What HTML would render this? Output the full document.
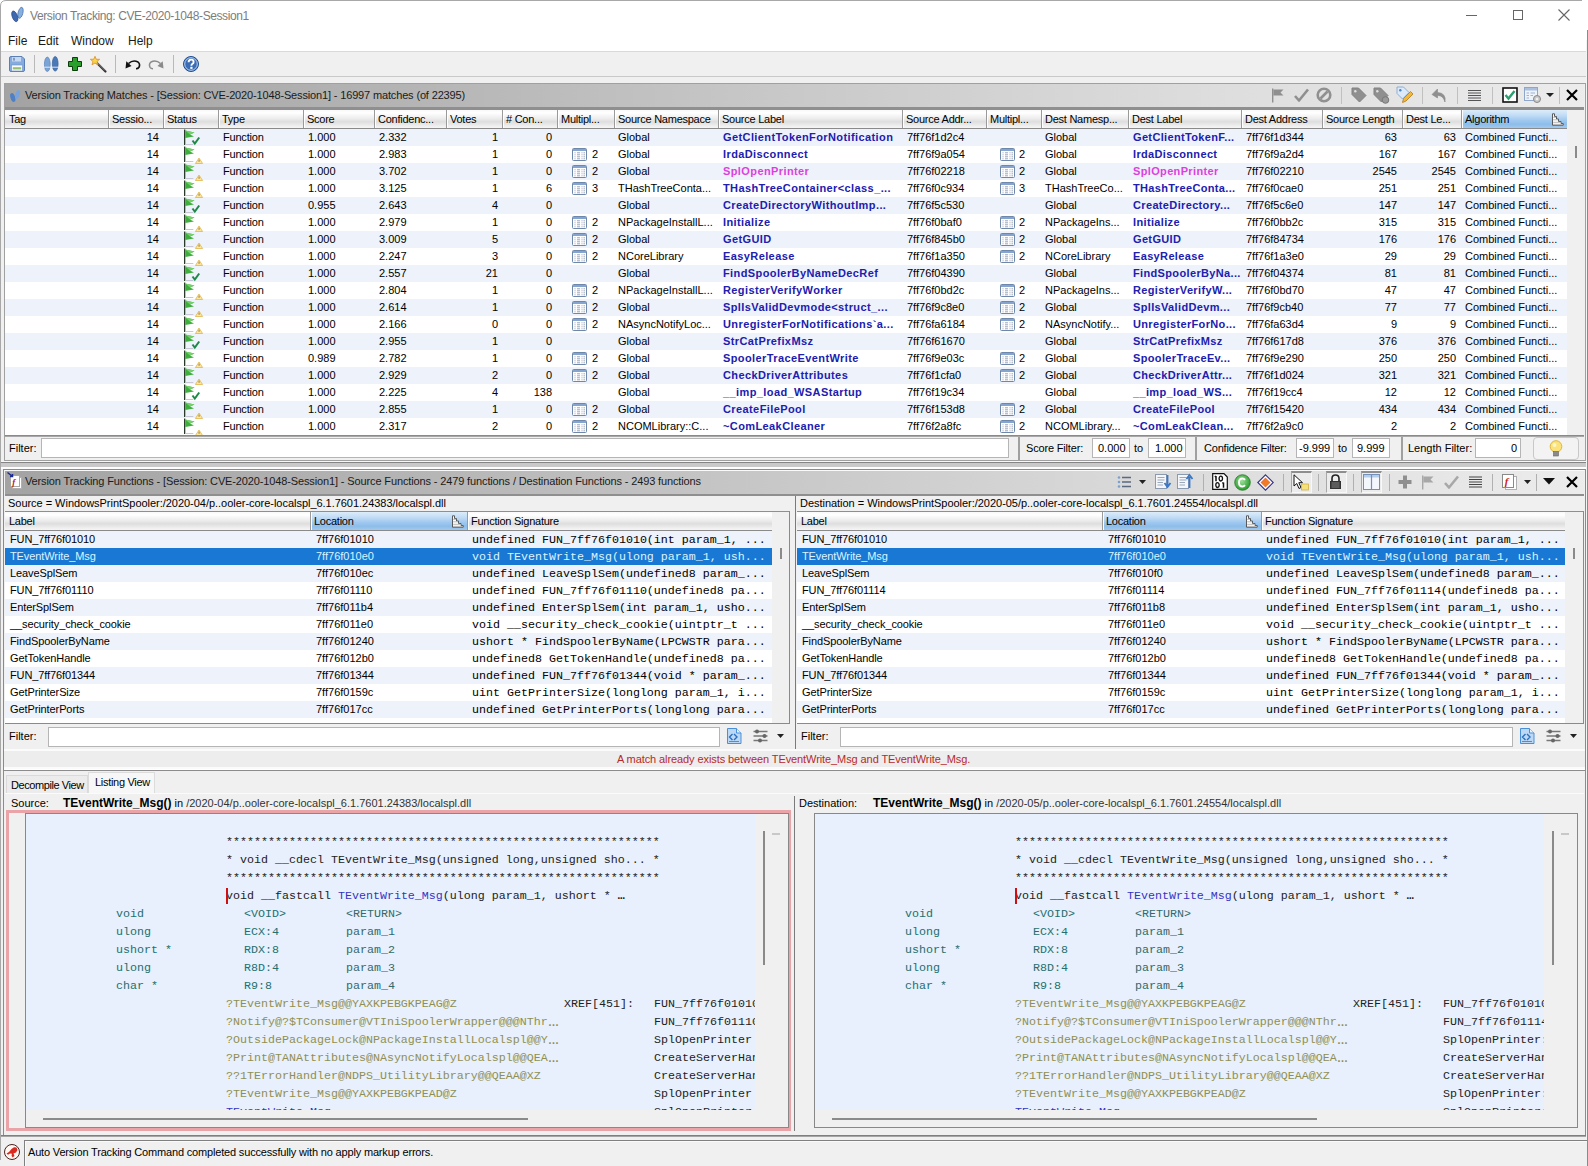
<!DOCTYPE html><html><head><meta charset="utf-8"><style>
*{margin:0;padding:0;box-sizing:border-box}
html,body{width:1588px;height:1166px;overflow:hidden;background:#f0f0f0;font-family:"Liberation Sans",sans-serif;font-size:11px;color:#000}
div{position:absolute}
.t{white-space:nowrap}
.m{font-family:"Liberation Mono",monospace;font-size:11.67px}
svg{position:absolute;overflow:visible}
</style></head><body><div style="left:0px;top:0px;width:1588px;height:32px;background:#fff"></div><div style="left:0px;top:32px;width:1588px;height:19px;background:#fff"></div><div style="left:0px;top:51px;width:1588px;height:1px;background:#d9d9d9"></div><div style="left:0px;top:52px;width:1588px;height:24px;background:#f0f0f0"></div><div style="left:0px;top:76px;width:1588px;height:1px;background:#c9c9c9"></div><div style="left:0px;top:77px;width:1588px;height:6px;background:#f0f0f0"></div><div style="left:0px;top:6px;width:1px;height:1154px;background:#a8a8a8"></div><div style="left:6px;top:0px;width:1576px;height:1px;background:#a8a8a8"></div><svg style="left:0;top:0" width="8" height="8"><path d="M0.5 8V6Q0.5 0.5 6 0.5H8" fill="none" stroke="#a8a8a8"/></svg><div style="left:1587px;top:30px;width:1px;height:1136px;background:#8a8a8a"></div><div style="left:1586px;top:40px;width:1px;height:1126px;background:#f4f4f4"></div><div class="t" style="left:30px;top:7px;height:18px;line-height:18px;font-size:12px;color:#7d7d7d;letter-spacing:-0.4px">Version Tracking: CVE-2020-1048-Session1</div><svg style="left:10px;top:5px" width="16" height="20" viewBox="0 0 16 20"><ellipse cx="10.5" cy="7.8" rx="2.4" ry="5.6" fill="#86b0e0" stroke="#4a70a8" stroke-width="0.7" transform="rotate(14 10.5 7.8)"/><ellipse cx="4.8" cy="11.3" rx="2.6" ry="5.6" fill="#3f68b0" stroke="#2a4a88" stroke-width="0.7" transform="rotate(-20 4.8 11.3)"/></svg><div style="left:1466px;top:15px;width:11px;height:1px;background:#666"></div><div style="left:1513px;top:10px;width:10px;height:10px;border:1px solid #666"></div><svg style="left:1558px;top:9px" width="12" height="12"><path d="M0.5 0.5L11.5 11.5M11.5 0.5L0.5 11.5" stroke="#666" stroke-width="1.1"/></svg><div class="t" style="left:8px;top:33px;height:17px;line-height:17px;font-size:12px;color:#1a1a1a">File</div><div class="t" style="left:38px;top:33px;height:17px;line-height:17px;font-size:12px;color:#1a1a1a">Edit</div><div class="t" style="left:71px;top:33px;height:17px;line-height:17px;font-size:12px;color:#1a1a1a">Window</div><div class="t" style="left:128px;top:33px;height:17px;line-height:17px;font-size:12px;color:#1a1a1a">Help</div><svg style="left:9px;top:56px" width="16" height="16" viewBox="0 0 16 16"><path d="M0.5 2Q0.5 0.5 2 0.5H13L15.5 3V14Q15.5 15.5 14 15.5H2Q0.5 15.5 0.5 14Z" fill="#86abdf" stroke="#5b7fb5"/><rect x="3" y="1" width="9" height="4.5" fill="#c6d9f2"/><rect x="4.5" y="1.8" width="1" height="2.8" fill="#3a5a90"/><rect x="2.5" y="9" width="11" height="6" fill="#f8fbff" stroke="#6a8ec2" stroke-width="0.6"/><rect x="3.8" y="11.2" width="8.4" height="2.2" fill="#96c070"/></svg><div style="left:34px;top:55px;width:1px;height:18px;background:#b9b9b9"></div><svg style="left:44px;top:56px" width="15" height="16" viewBox="0 0 15 16"><ellipse cx="3.3" cy="8.3" rx="2.9" ry="7.2" fill="#7aa3d8" stroke="#5a82ba" stroke-width="0.7"/><ellipse cx="11.2" cy="7.8" rx="2.9" ry="7.3" fill="#4a78b8" stroke="#35609e" stroke-width="0.7"/><path d="M0 11.2H15" stroke="#f0f0f0" stroke-width="0.9"/></svg><svg style="left:68px;top:57px" width="14" height="14" viewBox="0 0 14 14"><path d="M4.5 0.5H9.5V4.5H13.5V9.5H9.5V13.5H4.5V9.5H0.5V4.5H4.5Z" fill="#2aa02a" stroke="#0d3d0d" stroke-width="1"/></svg><svg style="left:90px;top:56px" width="17" height="17" viewBox="0 0 17 17"><line x1="6" y1="6" x2="15.5" y2="15.5" stroke="#333" stroke-width="2.2" stroke-linecap="round"/><line x1="7" y1="6.5" x2="15" y2="14.5" stroke="#999" stroke-width="0.8"/><path d="M5 0.3L6.3 3.3L9.6 3.3L7 5.5L8 8.8L5 7L2 8.8L3 5.5L0.4 3.3L3.7 3.3Z" fill="#f7d54a" stroke="#e08a2a" stroke-width="0.8"/></svg><div style="left:115px;top:55px;width:1px;height:18px;background:#b9b9b9"></div><svg style="left:125px;top:59px" width="16" height="11" viewBox="0 0 16 11"><path d="M3.5 4.5Q8 0.5 13 3Q15.5 5 14 8.3Q13 9.8 11 9.8" fill="none" stroke="#111" stroke-width="1.6"/><path d="M0.5 9.5L1.3 2.3L6.5 7Z" fill="#111"/></svg><svg style="left:148px;top:59px" width="16" height="11" viewBox="0 0 16 11"><path d="M12.5 4.5Q8 0.5 3 3Q0.5 5 2 8.3Q3 9.8 5 9.8" fill="none" stroke="#8a8a8a" stroke-width="1.5"/><path d="M15.5 9.5L14.7 2.3L9.5 7Z" fill="#8a8a8a"/></svg><div style="left:173px;top:55px;width:1px;height:18px;background:#b9b9b9"></div><svg style="left:183px;top:56px" width="16" height="16" viewBox="0 0 16 16"><circle cx="8" cy="8" r="7.5" fill="#3a6db5" stroke="#1f4f90"/><circle cx="8" cy="8" r="6.3" fill="none" stroke="#c8daf2" stroke-width="0.9"/><path d="M5.6 6.2Q5.6 3.6 8.1 3.6Q10.6 3.6 10.6 5.9Q10.6 7.2 9.2 8Q8.4 8.5 8.4 9.7" fill="none" stroke="#fff" stroke-width="1.9"/><rect x="7.3" y="10.8" width="2.2" height="2.1" fill="#fff"/></svg><div style="left:4px;top:83px;width:1582px;height:378px;border:1px solid #a0a0a0;background:#f0f0f0"></div><div style="left:5px;top:84px;width:1579px;height:23px;background:linear-gradient(90deg,#a3a3a3 0%,#b4b4b4 25%,#c9c9c9 50%,#dcdcdc 75%,#ececec 100%)"></div><div style="left:5px;top:107px;width:1579px;height:3px;background:#8f8f8f"></div><div class="t" style="left:25px;top:84px;height:23px;line-height:23px;color:#1a1a1a;letter-spacing:-0.15px">Version Tracking Matches - [Session: CVE-2020-1048-Session1] - 16997 matches (of 22395)</div><svg style="left:9px;top:88px" width="12" height="15" viewBox="0 0 12 15"><ellipse cx="3.8" cy="9.5" rx="2.3" ry="4.6" fill="#4f7fc4" transform="rotate(-18 3.8 9.5)"/><ellipse cx="8.5" cy="6.5" rx="2.1" ry="4.6" fill="#7aa3dc" transform="rotate(18 8.5 6.5)"/></svg><svg style="left:1271px;top:88px" width="14" height="15" viewBox="0 0 14 15"><rect x="1" y="0.5" width="1.4" height="14" fill="#8f8f8f"/><path d="M2.4 1.5H12.5L9.5 4.5L12.5 7.5H2.4Z" fill="#8f8f8f"/></svg><svg style="left:1294px;top:88px" width="15" height="14" viewBox="0 0 15 14"><path d="M1 8L5 12.5L14 1.5" fill="none" stroke="#8f8f8f" stroke-width="2.6" stroke-linejoin="round"/></svg><svg style="left:1316px;top:87px" width="16" height="16" viewBox="0 0 16 16"><circle cx="8" cy="8" r="6.3" fill="none" stroke="#909090" stroke-width="2.6"/><path d="M4.5 11.5L11.5 4.5" stroke="#909090" stroke-width="2.6"/></svg><div style="left:1341px;top:87px;width:1px;height:17px;background:#c0c0c0"></div><svg style="left:1351px;top:87px" width="16" height="16" viewBox="0 0 16 16"><path d="M1 1H7.5L15 8.5L8.5 15L1 7.5Z" fill="#8f8f8f" stroke="#808080"/><circle cx="4.3" cy="4.3" r="1.2" fill="#e0e0e0"/></svg><svg style="left:1373px;top:87px" width="17" height="17" viewBox="0 0 17 17"><path d="M1 1H7.5L15 8.5L8.5 15L1 7.5Z" fill="#8f8f8f" stroke="#808080"/><circle cx="4.3" cy="4.3" r="1.2" fill="#e0e0e0"/><circle cx="12.5" cy="13" r="3.3" fill="#9a9a9a" stroke="#777"/></svg><svg style="left:1396px;top:86px" width="18" height="18" viewBox="0 0 18 18"><path d="M1 1H7.5L13 6.5L6.5 13L1 7.5Z" fill="#dbe9f8" stroke="#8aaed6"/><circle cx="4.3" cy="4.3" r="1.2" fill="#4a86c8"/><path d="M6.5 16.5L7.5 12.5L14.5 5.5L17 8L10 15Z" fill="#f3b73b" stroke="#b07a20" stroke-width="0.8"/></svg><div style="left:1422px;top:87px;width:1px;height:17px;background:#c0c0c0"></div><svg style="left:1431px;top:87px" width="17" height="17" viewBox="0 0 17 17"><path d="M6.5 2L1 7.5L6.5 11V8.5Q12 8 14 15Q15.5 6 6.5 5.5Z" fill="#8f8f8f" stroke="#888" stroke-width="0.6"/></svg><div style="left:1457px;top:87px;width:1px;height:17px;background:#c0c0c0"></div><svg style="left:1467px;top:88px" width="15" height="15" viewBox="0 0 15 15"><path d="M1 2.5H14M1 5H14M1 7.5H14M1 10H14M1 12.5H14" stroke="#555" stroke-width="1.1"/></svg><div style="left:1492px;top:87px;width:1px;height:17px;background:#c0c0c0"></div><svg style="left:1502px;top:87px" width="16" height="16" viewBox="0 0 16 16"><rect x="1" y="1" width="14" height="14" fill="#fff" stroke="#111" stroke-width="1.6"/><path d="M3.5 8L6.5 11.5L12.5 4" fill="none" stroke="#2ca070" stroke-width="2.4"/></svg><svg style="left:1524px;top:87px" width="18" height="17" viewBox="0 0 18 17"><rect x="0.5" y="0.5" width="13" height="13" fill="#eef3fa" stroke="#8ea6c8"/><rect x="1" y="1" width="12" height="2.5" fill="#a9c0de"/><path d="M2.5 6H5M6.5 6H11M2.5 8.5H5M6.5 8.5H9M2.5 11H5" stroke="#9fb3cf"/><circle cx="13" cy="12" r="3.5" fill="#c8c8c8" stroke="#888"/><circle cx="13" cy="12" r="1.3" fill="#f0f0f0"/></svg><svg style="left:1546px;top:93px" width="8" height="5"><path d="M0 0H8L4 4Z" fill="#222"/></svg><div style="left:1559px;top:87px;width:1px;height:17px;background:#c0c0c0"></div><svg style="left:1566px;top:89px" width="12" height="12" viewBox="0 0 12 12"><path d="M1 1L11 11M11 1L1 11" stroke="#000" stroke-width="2.2"/></svg><div style="left:5px;top:129px;width:1562px;height:306px;background:#fff"></div><div style="left:5px;top:129px;width:1562px;height:17px;background:#edf2fb"></div><div style="left:5px;top:163px;width:1562px;height:17px;background:#edf2fb"></div><div style="left:5px;top:197px;width:1562px;height:17px;background:#edf2fb"></div><div style="left:5px;top:231px;width:1562px;height:17px;background:#edf2fb"></div><div style="left:5px;top:265px;width:1562px;height:17px;background:#edf2fb"></div><div style="left:5px;top:299px;width:1562px;height:17px;background:#edf2fb"></div><div style="left:5px;top:333px;width:1562px;height:17px;background:#edf2fb"></div><div style="left:5px;top:367px;width:1562px;height:17px;background:#edf2fb"></div><div style="left:5px;top:401px;width:1562px;height:17px;background:#edf2fb"></div><div class="t" style="right:1429px;top:129px;height:17px;line-height:17px;text-align:right;">14</div><svg style="left:184px;top:129px" width="20" height="17" viewBox="0 0 20 17"><rect x="0" y="0.5" width="1.3" height="15.5" fill="#2a3a2a"/><path d="M1.2 1.5L10.5 3.5L6 5.5L10 7.5L1.2 9Z" fill="#3fae3f"/><path d="M1.2 1.5L10.5 3.5L6 5.5Z" fill="#74d06a"/><rect x="1.3" y="15" width="8" height="1" fill="#c7c7d7"/><path d="M8.5 11.5L10.8 14.5L15.2 8.5" fill="none" stroke="#1e8a4a" stroke-width="2"/></svg><div class="t" style="left:223px;top:129px;height:17px;line-height:17px;letter-spacing:-0.2px">Function</div><div class="t" style="left:308px;top:129px;height:17px;line-height:17px;">1.000</div><div class="t" style="left:379px;top:129px;height:17px;line-height:17px;">2.332</div><div class="t" style="right:1090px;top:129px;height:17px;line-height:17px;text-align:right;">1</div><div class="t" style="right:1036px;top:129px;height:17px;line-height:17px;text-align:right;">0</div><div class="t" style="left:618px;top:129px;height:17px;line-height:17px;">Global</div><div class="t" style="left:723px;top:129px;height:17px;line-height:17px;font-weight:bold;color:#2020ae;letter-spacing:0.4px">GetClientTokenForNotification</div><div class="t" style="left:907px;top:129px;height:17px;line-height:17px;">7ff76f1d2c4</div><div class="t" style="left:1045px;top:129px;height:17px;line-height:17px;">Global</div><div class="t" style="left:1133px;top:129px;height:17px;line-height:17px;font-weight:bold;color:#2020ae;letter-spacing:0.35px">GetClientTokenF...</div><div class="t" style="left:1246px;top:129px;height:17px;line-height:17px;">7ff76f1d344</div><div class="t" style="right:191px;top:129px;height:17px;line-height:17px;text-align:right;">63</div><div class="t" style="right:132px;top:129px;height:17px;line-height:17px;text-align:right;">63</div><div class="t" style="left:1465px;top:129px;height:17px;line-height:17px;">Combined Functi...</div><div class="t" style="right:1429px;top:146px;height:17px;line-height:17px;text-align:right;">14</div><svg style="left:184px;top:146px" width="20" height="17" viewBox="0 0 20 17"><rect x="0" y="0.5" width="1.3" height="15.5" fill="#2a3a2a"/><path d="M1.2 1.5L10.5 3.5L6 5.5L10 7.5L1.2 9Z" fill="#3fae3f"/><path d="M1.2 1.5L10.5 3.5L6 5.5Z" fill="#74d06a"/><rect x="1.3" y="15" width="8" height="1" fill="#c7c7d7"/><path d="M15 12L18.6 17.5H11.4Z" fill="#fbe7a0" stroke="#e2b44a" stroke-width="0.8"/><rect x="14.6" y="13.6" width="0.9" height="2.2" fill="#8a7030"/></svg><div class="t" style="left:223px;top:146px;height:17px;line-height:17px;letter-spacing:-0.2px">Function</div><div class="t" style="left:308px;top:146px;height:17px;line-height:17px;">1.000</div><div class="t" style="left:379px;top:146px;height:17px;line-height:17px;">2.983</div><div class="t" style="right:1090px;top:146px;height:17px;line-height:17px;text-align:right;">1</div><div class="t" style="right:1036px;top:146px;height:17px;line-height:17px;text-align:right;">0</div><svg style="left:572px;top:148px" width="15" height="13" viewBox="0 0 15 13"><rect x="0.5" y="0.5" width="14" height="12" rx="1" fill="#fff" stroke="#6d88ab"/><rect x="1" y="1" width="13" height="2" fill="#85a5d0"/><path d="M2.5 4.8H3.5M5 4.8H8M9.5 4.8H10.5M11.5 4.8H13M2.5 6.8H3.5M5 6.8H8M9.5 6.8H10.5M11.5 6.8H13M2.5 8.8H3.5M5 8.8H8M9.5 8.8H10.5M11.5 8.8H13M2.5 10.8H3.5M5 10.8H8M9.5 10.8H10.5M11.5 10.8H13" stroke="#9aa6b8" stroke-width="1"/></svg><div class="t" style="left:592px;top:146px;height:17px;line-height:17px;">2</div><div class="t" style="left:618px;top:146px;height:17px;line-height:17px;">Global</div><div class="t" style="left:723px;top:146px;height:17px;line-height:17px;font-weight:bold;color:#2020ae;letter-spacing:0.4px">IrdaDisconnect</div><div class="t" style="left:907px;top:146px;height:17px;line-height:17px;">7ff76f9a054</div><svg style="left:1000px;top:148px" width="15" height="13" viewBox="0 0 15 13"><rect x="0.5" y="0.5" width="14" height="12" rx="1" fill="#fff" stroke="#6d88ab"/><rect x="1" y="1" width="13" height="2" fill="#85a5d0"/><path d="M2.5 4.8H3.5M5 4.8H8M9.5 4.8H10.5M11.5 4.8H13M2.5 6.8H3.5M5 6.8H8M9.5 6.8H10.5M11.5 6.8H13M2.5 8.8H3.5M5 8.8H8M9.5 8.8H10.5M11.5 8.8H13M2.5 10.8H3.5M5 10.8H8M9.5 10.8H10.5M11.5 10.8H13" stroke="#9aa6b8" stroke-width="1"/></svg><div class="t" style="left:1019px;top:146px;height:17px;line-height:17px;">2</div><div class="t" style="left:1045px;top:146px;height:17px;line-height:17px;">Global</div><div class="t" style="left:1133px;top:146px;height:17px;line-height:17px;font-weight:bold;color:#2020ae;letter-spacing:0.35px">IrdaDisconnect</div><div class="t" style="left:1246px;top:146px;height:17px;line-height:17px;">7ff76f9a2d4</div><div class="t" style="right:191px;top:146px;height:17px;line-height:17px;text-align:right;">167</div><div class="t" style="right:132px;top:146px;height:17px;line-height:17px;text-align:right;">167</div><div class="t" style="left:1465px;top:146px;height:17px;line-height:17px;">Combined Functi...</div><div class="t" style="right:1429px;top:163px;height:17px;line-height:17px;text-align:right;">14</div><svg style="left:184px;top:163px" width="20" height="17" viewBox="0 0 20 17"><rect x="0" y="0.5" width="1.3" height="15.5" fill="#2a3a2a"/><path d="M1.2 1.5L10.5 3.5L6 5.5L10 7.5L1.2 9Z" fill="#3fae3f"/><path d="M1.2 1.5L10.5 3.5L6 5.5Z" fill="#74d06a"/><rect x="1.3" y="15" width="8" height="1" fill="#c7c7d7"/><path d="M15 12L18.6 17.5H11.4Z" fill="#fbe7a0" stroke="#e2b44a" stroke-width="0.8"/><rect x="14.6" y="13.6" width="0.9" height="2.2" fill="#8a7030"/></svg><div class="t" style="left:223px;top:163px;height:17px;line-height:17px;letter-spacing:-0.2px">Function</div><div class="t" style="left:308px;top:163px;height:17px;line-height:17px;">1.000</div><div class="t" style="left:379px;top:163px;height:17px;line-height:17px;">3.702</div><div class="t" style="right:1090px;top:163px;height:17px;line-height:17px;text-align:right;">1</div><div class="t" style="right:1036px;top:163px;height:17px;line-height:17px;text-align:right;">0</div><svg style="left:572px;top:165px" width="15" height="13" viewBox="0 0 15 13"><rect x="0.5" y="0.5" width="14" height="12" rx="1" fill="#fff" stroke="#6d88ab"/><rect x="1" y="1" width="13" height="2" fill="#85a5d0"/><path d="M2.5 4.8H3.5M5 4.8H8M9.5 4.8H10.5M11.5 4.8H13M2.5 6.8H3.5M5 6.8H8M9.5 6.8H10.5M11.5 6.8H13M2.5 8.8H3.5M5 8.8H8M9.5 8.8H10.5M11.5 8.8H13M2.5 10.8H3.5M5 10.8H8M9.5 10.8H10.5M11.5 10.8H13" stroke="#9aa6b8" stroke-width="1"/></svg><div class="t" style="left:592px;top:163px;height:17px;line-height:17px;">2</div><div class="t" style="left:618px;top:163px;height:17px;line-height:17px;">Global</div><div class="t" style="left:723px;top:163px;height:17px;line-height:17px;font-weight:bold;color:#dd3fdd;letter-spacing:0.4px">SplOpenPrinter</div><div class="t" style="left:907px;top:163px;height:17px;line-height:17px;">7ff76f02218</div><svg style="left:1000px;top:165px" width="15" height="13" viewBox="0 0 15 13"><rect x="0.5" y="0.5" width="14" height="12" rx="1" fill="#fff" stroke="#6d88ab"/><rect x="1" y="1" width="13" height="2" fill="#85a5d0"/><path d="M2.5 4.8H3.5M5 4.8H8M9.5 4.8H10.5M11.5 4.8H13M2.5 6.8H3.5M5 6.8H8M9.5 6.8H10.5M11.5 6.8H13M2.5 8.8H3.5M5 8.8H8M9.5 8.8H10.5M11.5 8.8H13M2.5 10.8H3.5M5 10.8H8M9.5 10.8H10.5M11.5 10.8H13" stroke="#9aa6b8" stroke-width="1"/></svg><div class="t" style="left:1019px;top:163px;height:17px;line-height:17px;">2</div><div class="t" style="left:1045px;top:163px;height:17px;line-height:17px;">Global</div><div class="t" style="left:1133px;top:163px;height:17px;line-height:17px;font-weight:bold;color:#dd3fdd;letter-spacing:0.35px">SplOpenPrinter</div><div class="t" style="left:1246px;top:163px;height:17px;line-height:17px;">7ff76f02210</div><div class="t" style="right:191px;top:163px;height:17px;line-height:17px;text-align:right;">2545</div><div class="t" style="right:132px;top:163px;height:17px;line-height:17px;text-align:right;">2545</div><div class="t" style="left:1465px;top:163px;height:17px;line-height:17px;">Combined Functi...</div><div class="t" style="right:1429px;top:180px;height:17px;line-height:17px;text-align:right;">14</div><svg style="left:184px;top:180px" width="20" height="17" viewBox="0 0 20 17"><rect x="0" y="0.5" width="1.3" height="15.5" fill="#2a3a2a"/><path d="M1.2 1.5L10.5 3.5L6 5.5L10 7.5L1.2 9Z" fill="#3fae3f"/><path d="M1.2 1.5L10.5 3.5L6 5.5Z" fill="#74d06a"/><rect x="1.3" y="15" width="8" height="1" fill="#c7c7d7"/><path d="M15 12L18.6 17.5H11.4Z" fill="#fbe7a0" stroke="#e2b44a" stroke-width="0.8"/><rect x="14.6" y="13.6" width="0.9" height="2.2" fill="#8a7030"/></svg><div class="t" style="left:223px;top:180px;height:17px;line-height:17px;letter-spacing:-0.2px">Function</div><div class="t" style="left:308px;top:180px;height:17px;line-height:17px;">1.000</div><div class="t" style="left:379px;top:180px;height:17px;line-height:17px;">3.125</div><div class="t" style="right:1090px;top:180px;height:17px;line-height:17px;text-align:right;">1</div><div class="t" style="right:1036px;top:180px;height:17px;line-height:17px;text-align:right;">6</div><svg style="left:572px;top:182px" width="15" height="13" viewBox="0 0 15 13"><rect x="0.5" y="0.5" width="14" height="12" rx="1" fill="#fff" stroke="#6d88ab"/><rect x="1" y="1" width="13" height="2" fill="#85a5d0"/><path d="M2.5 4.8H3.5M5 4.8H8M9.5 4.8H10.5M11.5 4.8H13M2.5 6.8H3.5M5 6.8H8M9.5 6.8H10.5M11.5 6.8H13M2.5 8.8H3.5M5 8.8H8M9.5 8.8H10.5M11.5 8.8H13M2.5 10.8H3.5M5 10.8H8M9.5 10.8H10.5M11.5 10.8H13" stroke="#9aa6b8" stroke-width="1"/></svg><div class="t" style="left:592px;top:180px;height:17px;line-height:17px;">3</div><div class="t" style="left:618px;top:180px;height:17px;line-height:17px;">THashTreeConta...</div><div class="t" style="left:723px;top:180px;height:17px;line-height:17px;font-weight:bold;color:#2020ae;letter-spacing:0.4px">THashTreeContainer&lt;class_...</div><div class="t" style="left:907px;top:180px;height:17px;line-height:17px;">7ff76f0c934</div><svg style="left:1000px;top:182px" width="15" height="13" viewBox="0 0 15 13"><rect x="0.5" y="0.5" width="14" height="12" rx="1" fill="#fff" stroke="#6d88ab"/><rect x="1" y="1" width="13" height="2" fill="#85a5d0"/><path d="M2.5 4.8H3.5M5 4.8H8M9.5 4.8H10.5M11.5 4.8H13M2.5 6.8H3.5M5 6.8H8M9.5 6.8H10.5M11.5 6.8H13M2.5 8.8H3.5M5 8.8H8M9.5 8.8H10.5M11.5 8.8H13M2.5 10.8H3.5M5 10.8H8M9.5 10.8H10.5M11.5 10.8H13" stroke="#9aa6b8" stroke-width="1"/></svg><div class="t" style="left:1019px;top:180px;height:17px;line-height:17px;">3</div><div class="t" style="left:1045px;top:180px;height:17px;line-height:17px;">THashTreeCo...</div><div class="t" style="left:1133px;top:180px;height:17px;line-height:17px;font-weight:bold;color:#2020ae;letter-spacing:0.35px">THashTreeConta...</div><div class="t" style="left:1246px;top:180px;height:17px;line-height:17px;">7ff76f0cae0</div><div class="t" style="right:191px;top:180px;height:17px;line-height:17px;text-align:right;">251</div><div class="t" style="right:132px;top:180px;height:17px;line-height:17px;text-align:right;">251</div><div class="t" style="left:1465px;top:180px;height:17px;line-height:17px;">Combined Functi...</div><div class="t" style="right:1429px;top:197px;height:17px;line-height:17px;text-align:right;">14</div><svg style="left:184px;top:197px" width="20" height="17" viewBox="0 0 20 17"><rect x="0" y="0.5" width="1.3" height="15.5" fill="#2a3a2a"/><path d="M1.2 1.5L10.5 3.5L6 5.5L10 7.5L1.2 9Z" fill="#3fae3f"/><path d="M1.2 1.5L10.5 3.5L6 5.5Z" fill="#74d06a"/><rect x="1.3" y="15" width="8" height="1" fill="#c7c7d7"/><path d="M8.5 11.5L10.8 14.5L15.2 8.5" fill="none" stroke="#1e8a4a" stroke-width="2"/></svg><div class="t" style="left:223px;top:197px;height:17px;line-height:17px;letter-spacing:-0.2px">Function</div><div class="t" style="left:308px;top:197px;height:17px;line-height:17px;">0.955</div><div class="t" style="left:379px;top:197px;height:17px;line-height:17px;">2.643</div><div class="t" style="right:1090px;top:197px;height:17px;line-height:17px;text-align:right;">4</div><div class="t" style="right:1036px;top:197px;height:17px;line-height:17px;text-align:right;">0</div><div class="t" style="left:618px;top:197px;height:17px;line-height:17px;">Global</div><div class="t" style="left:723px;top:197px;height:17px;line-height:17px;font-weight:bold;color:#2020ae;letter-spacing:0.4px">CreateDirectoryWithoutImp...</div><div class="t" style="left:907px;top:197px;height:17px;line-height:17px;">7ff76f5c530</div><div class="t" style="left:1045px;top:197px;height:17px;line-height:17px;">Global</div><div class="t" style="left:1133px;top:197px;height:17px;line-height:17px;font-weight:bold;color:#2020ae;letter-spacing:0.35px">CreateDirectory...</div><div class="t" style="left:1246px;top:197px;height:17px;line-height:17px;">7ff76f5c6e0</div><div class="t" style="right:191px;top:197px;height:17px;line-height:17px;text-align:right;">147</div><div class="t" style="right:132px;top:197px;height:17px;line-height:17px;text-align:right;">147</div><div class="t" style="left:1465px;top:197px;height:17px;line-height:17px;">Combined Functi...</div><div class="t" style="right:1429px;top:214px;height:17px;line-height:17px;text-align:right;">14</div><svg style="left:184px;top:214px" width="20" height="17" viewBox="0 0 20 17"><rect x="0" y="0.5" width="1.3" height="15.5" fill="#2a3a2a"/><path d="M1.2 1.5L10.5 3.5L6 5.5L10 7.5L1.2 9Z" fill="#3fae3f"/><path d="M1.2 1.5L10.5 3.5L6 5.5Z" fill="#74d06a"/><rect x="1.3" y="15" width="8" height="1" fill="#c7c7d7"/><path d="M15 12L18.6 17.5H11.4Z" fill="#fbe7a0" stroke="#e2b44a" stroke-width="0.8"/><rect x="14.6" y="13.6" width="0.9" height="2.2" fill="#8a7030"/></svg><div class="t" style="left:223px;top:214px;height:17px;line-height:17px;letter-spacing:-0.2px">Function</div><div class="t" style="left:308px;top:214px;height:17px;line-height:17px;">1.000</div><div class="t" style="left:379px;top:214px;height:17px;line-height:17px;">2.979</div><div class="t" style="right:1090px;top:214px;height:17px;line-height:17px;text-align:right;">1</div><div class="t" style="right:1036px;top:214px;height:17px;line-height:17px;text-align:right;">0</div><svg style="left:572px;top:216px" width="15" height="13" viewBox="0 0 15 13"><rect x="0.5" y="0.5" width="14" height="12" rx="1" fill="#fff" stroke="#6d88ab"/><rect x="1" y="1" width="13" height="2" fill="#85a5d0"/><path d="M2.5 4.8H3.5M5 4.8H8M9.5 4.8H10.5M11.5 4.8H13M2.5 6.8H3.5M5 6.8H8M9.5 6.8H10.5M11.5 6.8H13M2.5 8.8H3.5M5 8.8H8M9.5 8.8H10.5M11.5 8.8H13M2.5 10.8H3.5M5 10.8H8M9.5 10.8H10.5M11.5 10.8H13" stroke="#9aa6b8" stroke-width="1"/></svg><div class="t" style="left:592px;top:214px;height:17px;line-height:17px;">2</div><div class="t" style="left:618px;top:214px;height:17px;line-height:17px;">NPackageInstallL...</div><div class="t" style="left:723px;top:214px;height:17px;line-height:17px;font-weight:bold;color:#2020ae;letter-spacing:0.4px">Initialize</div><div class="t" style="left:907px;top:214px;height:17px;line-height:17px;">7ff76f0baf0</div><svg style="left:1000px;top:216px" width="15" height="13" viewBox="0 0 15 13"><rect x="0.5" y="0.5" width="14" height="12" rx="1" fill="#fff" stroke="#6d88ab"/><rect x="1" y="1" width="13" height="2" fill="#85a5d0"/><path d="M2.5 4.8H3.5M5 4.8H8M9.5 4.8H10.5M11.5 4.8H13M2.5 6.8H3.5M5 6.8H8M9.5 6.8H10.5M11.5 6.8H13M2.5 8.8H3.5M5 8.8H8M9.5 8.8H10.5M11.5 8.8H13M2.5 10.8H3.5M5 10.8H8M9.5 10.8H10.5M11.5 10.8H13" stroke="#9aa6b8" stroke-width="1"/></svg><div class="t" style="left:1019px;top:214px;height:17px;line-height:17px;">2</div><div class="t" style="left:1045px;top:214px;height:17px;line-height:17px;">NPackageIns...</div><div class="t" style="left:1133px;top:214px;height:17px;line-height:17px;font-weight:bold;color:#2020ae;letter-spacing:0.35px">Initialize</div><div class="t" style="left:1246px;top:214px;height:17px;line-height:17px;">7ff76f0bb2c</div><div class="t" style="right:191px;top:214px;height:17px;line-height:17px;text-align:right;">315</div><div class="t" style="right:132px;top:214px;height:17px;line-height:17px;text-align:right;">315</div><div class="t" style="left:1465px;top:214px;height:17px;line-height:17px;">Combined Functi...</div><div class="t" style="right:1429px;top:231px;height:17px;line-height:17px;text-align:right;">14</div><svg style="left:184px;top:231px" width="20" height="17" viewBox="0 0 20 17"><rect x="0" y="0.5" width="1.3" height="15.5" fill="#2a3a2a"/><path d="M1.2 1.5L10.5 3.5L6 5.5L10 7.5L1.2 9Z" fill="#3fae3f"/><path d="M1.2 1.5L10.5 3.5L6 5.5Z" fill="#74d06a"/><rect x="1.3" y="15" width="8" height="1" fill="#c7c7d7"/><path d="M15 12L18.6 17.5H11.4Z" fill="#fbe7a0" stroke="#e2b44a" stroke-width="0.8"/><rect x="14.6" y="13.6" width="0.9" height="2.2" fill="#8a7030"/></svg><div class="t" style="left:223px;top:231px;height:17px;line-height:17px;letter-spacing:-0.2px">Function</div><div class="t" style="left:308px;top:231px;height:17px;line-height:17px;">1.000</div><div class="t" style="left:379px;top:231px;height:17px;line-height:17px;">3.009</div><div class="t" style="right:1090px;top:231px;height:17px;line-height:17px;text-align:right;">5</div><div class="t" style="right:1036px;top:231px;height:17px;line-height:17px;text-align:right;">0</div><svg style="left:572px;top:233px" width="15" height="13" viewBox="0 0 15 13"><rect x="0.5" y="0.5" width="14" height="12" rx="1" fill="#fff" stroke="#6d88ab"/><rect x="1" y="1" width="13" height="2" fill="#85a5d0"/><path d="M2.5 4.8H3.5M5 4.8H8M9.5 4.8H10.5M11.5 4.8H13M2.5 6.8H3.5M5 6.8H8M9.5 6.8H10.5M11.5 6.8H13M2.5 8.8H3.5M5 8.8H8M9.5 8.8H10.5M11.5 8.8H13M2.5 10.8H3.5M5 10.8H8M9.5 10.8H10.5M11.5 10.8H13" stroke="#9aa6b8" stroke-width="1"/></svg><div class="t" style="left:592px;top:231px;height:17px;line-height:17px;">2</div><div class="t" style="left:618px;top:231px;height:17px;line-height:17px;">Global</div><div class="t" style="left:723px;top:231px;height:17px;line-height:17px;font-weight:bold;color:#2020ae;letter-spacing:0.4px">GetGUID</div><div class="t" style="left:907px;top:231px;height:17px;line-height:17px;">7ff76f845b0</div><svg style="left:1000px;top:233px" width="15" height="13" viewBox="0 0 15 13"><rect x="0.5" y="0.5" width="14" height="12" rx="1" fill="#fff" stroke="#6d88ab"/><rect x="1" y="1" width="13" height="2" fill="#85a5d0"/><path d="M2.5 4.8H3.5M5 4.8H8M9.5 4.8H10.5M11.5 4.8H13M2.5 6.8H3.5M5 6.8H8M9.5 6.8H10.5M11.5 6.8H13M2.5 8.8H3.5M5 8.8H8M9.5 8.8H10.5M11.5 8.8H13M2.5 10.8H3.5M5 10.8H8M9.5 10.8H10.5M11.5 10.8H13" stroke="#9aa6b8" stroke-width="1"/></svg><div class="t" style="left:1019px;top:231px;height:17px;line-height:17px;">2</div><div class="t" style="left:1045px;top:231px;height:17px;line-height:17px;">Global</div><div class="t" style="left:1133px;top:231px;height:17px;line-height:17px;font-weight:bold;color:#2020ae;letter-spacing:0.35px">GetGUID</div><div class="t" style="left:1246px;top:231px;height:17px;line-height:17px;">7ff76f84734</div><div class="t" style="right:191px;top:231px;height:17px;line-height:17px;text-align:right;">176</div><div class="t" style="right:132px;top:231px;height:17px;line-height:17px;text-align:right;">176</div><div class="t" style="left:1465px;top:231px;height:17px;line-height:17px;">Combined Functi...</div><div class="t" style="right:1429px;top:248px;height:17px;line-height:17px;text-align:right;">14</div><svg style="left:184px;top:248px" width="20" height="17" viewBox="0 0 20 17"><rect x="0" y="0.5" width="1.3" height="15.5" fill="#2a3a2a"/><path d="M1.2 1.5L10.5 3.5L6 5.5L10 7.5L1.2 9Z" fill="#3fae3f"/><path d="M1.2 1.5L10.5 3.5L6 5.5Z" fill="#74d06a"/><rect x="1.3" y="15" width="8" height="1" fill="#c7c7d7"/><path d="M15 12L18.6 17.5H11.4Z" fill="#fbe7a0" stroke="#e2b44a" stroke-width="0.8"/><rect x="14.6" y="13.6" width="0.9" height="2.2" fill="#8a7030"/></svg><div class="t" style="left:223px;top:248px;height:17px;line-height:17px;letter-spacing:-0.2px">Function</div><div class="t" style="left:308px;top:248px;height:17px;line-height:17px;">1.000</div><div class="t" style="left:379px;top:248px;height:17px;line-height:17px;">2.247</div><div class="t" style="right:1090px;top:248px;height:17px;line-height:17px;text-align:right;">3</div><div class="t" style="right:1036px;top:248px;height:17px;line-height:17px;text-align:right;">0</div><svg style="left:572px;top:250px" width="15" height="13" viewBox="0 0 15 13"><rect x="0.5" y="0.5" width="14" height="12" rx="1" fill="#fff" stroke="#6d88ab"/><rect x="1" y="1" width="13" height="2" fill="#85a5d0"/><path d="M2.5 4.8H3.5M5 4.8H8M9.5 4.8H10.5M11.5 4.8H13M2.5 6.8H3.5M5 6.8H8M9.5 6.8H10.5M11.5 6.8H13M2.5 8.8H3.5M5 8.8H8M9.5 8.8H10.5M11.5 8.8H13M2.5 10.8H3.5M5 10.8H8M9.5 10.8H10.5M11.5 10.8H13" stroke="#9aa6b8" stroke-width="1"/></svg><div class="t" style="left:592px;top:248px;height:17px;line-height:17px;">2</div><div class="t" style="left:618px;top:248px;height:17px;line-height:17px;">NCoreLibrary</div><div class="t" style="left:723px;top:248px;height:17px;line-height:17px;font-weight:bold;color:#2020ae;letter-spacing:0.4px">EasyRelease</div><div class="t" style="left:907px;top:248px;height:17px;line-height:17px;">7ff76f1a350</div><svg style="left:1000px;top:250px" width="15" height="13" viewBox="0 0 15 13"><rect x="0.5" y="0.5" width="14" height="12" rx="1" fill="#fff" stroke="#6d88ab"/><rect x="1" y="1" width="13" height="2" fill="#85a5d0"/><path d="M2.5 4.8H3.5M5 4.8H8M9.5 4.8H10.5M11.5 4.8H13M2.5 6.8H3.5M5 6.8H8M9.5 6.8H10.5M11.5 6.8H13M2.5 8.8H3.5M5 8.8H8M9.5 8.8H10.5M11.5 8.8H13M2.5 10.8H3.5M5 10.8H8M9.5 10.8H10.5M11.5 10.8H13" stroke="#9aa6b8" stroke-width="1"/></svg><div class="t" style="left:1019px;top:248px;height:17px;line-height:17px;">2</div><div class="t" style="left:1045px;top:248px;height:17px;line-height:17px;">NCoreLibrary</div><div class="t" style="left:1133px;top:248px;height:17px;line-height:17px;font-weight:bold;color:#2020ae;letter-spacing:0.35px">EasyRelease</div><div class="t" style="left:1246px;top:248px;height:17px;line-height:17px;">7ff76f1a3e0</div><div class="t" style="right:191px;top:248px;height:17px;line-height:17px;text-align:right;">29</div><div class="t" style="right:132px;top:248px;height:17px;line-height:17px;text-align:right;">29</div><div class="t" style="left:1465px;top:248px;height:17px;line-height:17px;">Combined Functi...</div><div class="t" style="right:1429px;top:265px;height:17px;line-height:17px;text-align:right;">14</div><svg style="left:184px;top:265px" width="20" height="17" viewBox="0 0 20 17"><rect x="0" y="0.5" width="1.3" height="15.5" fill="#2a3a2a"/><path d="M1.2 1.5L10.5 3.5L6 5.5L10 7.5L1.2 9Z" fill="#3fae3f"/><path d="M1.2 1.5L10.5 3.5L6 5.5Z" fill="#74d06a"/><rect x="1.3" y="15" width="8" height="1" fill="#c7c7d7"/><path d="M8.5 11.5L10.8 14.5L15.2 8.5" fill="none" stroke="#1e8a4a" stroke-width="2"/></svg><div class="t" style="left:223px;top:265px;height:17px;line-height:17px;letter-spacing:-0.2px">Function</div><div class="t" style="left:308px;top:265px;height:17px;line-height:17px;">1.000</div><div class="t" style="left:379px;top:265px;height:17px;line-height:17px;">2.557</div><div class="t" style="right:1090px;top:265px;height:17px;line-height:17px;text-align:right;">21</div><div class="t" style="right:1036px;top:265px;height:17px;line-height:17px;text-align:right;">0</div><div class="t" style="left:618px;top:265px;height:17px;line-height:17px;">Global</div><div class="t" style="left:723px;top:265px;height:17px;line-height:17px;font-weight:bold;color:#2020ae;letter-spacing:0.4px">FindSpoolerByNameDecRef</div><div class="t" style="left:907px;top:265px;height:17px;line-height:17px;">7ff76f04390</div><div class="t" style="left:1045px;top:265px;height:17px;line-height:17px;">Global</div><div class="t" style="left:1133px;top:265px;height:17px;line-height:17px;font-weight:bold;color:#2020ae;letter-spacing:0.35px">FindSpoolerByNa...</div><div class="t" style="left:1246px;top:265px;height:17px;line-height:17px;">7ff76f04374</div><div class="t" style="right:191px;top:265px;height:17px;line-height:17px;text-align:right;">81</div><div class="t" style="right:132px;top:265px;height:17px;line-height:17px;text-align:right;">81</div><div class="t" style="left:1465px;top:265px;height:17px;line-height:17px;">Combined Functi...</div><div class="t" style="right:1429px;top:282px;height:17px;line-height:17px;text-align:right;">14</div><svg style="left:184px;top:282px" width="20" height="17" viewBox="0 0 20 17"><rect x="0" y="0.5" width="1.3" height="15.5" fill="#2a3a2a"/><path d="M1.2 1.5L10.5 3.5L6 5.5L10 7.5L1.2 9Z" fill="#3fae3f"/><path d="M1.2 1.5L10.5 3.5L6 5.5Z" fill="#74d06a"/><rect x="1.3" y="15" width="8" height="1" fill="#c7c7d7"/><path d="M15 12L18.6 17.5H11.4Z" fill="#fbe7a0" stroke="#e2b44a" stroke-width="0.8"/><rect x="14.6" y="13.6" width="0.9" height="2.2" fill="#8a7030"/></svg><div class="t" style="left:223px;top:282px;height:17px;line-height:17px;letter-spacing:-0.2px">Function</div><div class="t" style="left:308px;top:282px;height:17px;line-height:17px;">1.000</div><div class="t" style="left:379px;top:282px;height:17px;line-height:17px;">2.804</div><div class="t" style="right:1090px;top:282px;height:17px;line-height:17px;text-align:right;">1</div><div class="t" style="right:1036px;top:282px;height:17px;line-height:17px;text-align:right;">0</div><svg style="left:572px;top:284px" width="15" height="13" viewBox="0 0 15 13"><rect x="0.5" y="0.5" width="14" height="12" rx="1" fill="#fff" stroke="#6d88ab"/><rect x="1" y="1" width="13" height="2" fill="#85a5d0"/><path d="M2.5 4.8H3.5M5 4.8H8M9.5 4.8H10.5M11.5 4.8H13M2.5 6.8H3.5M5 6.8H8M9.5 6.8H10.5M11.5 6.8H13M2.5 8.8H3.5M5 8.8H8M9.5 8.8H10.5M11.5 8.8H13M2.5 10.8H3.5M5 10.8H8M9.5 10.8H10.5M11.5 10.8H13" stroke="#9aa6b8" stroke-width="1"/></svg><div class="t" style="left:592px;top:282px;height:17px;line-height:17px;">2</div><div class="t" style="left:618px;top:282px;height:17px;line-height:17px;">NPackageInstallL...</div><div class="t" style="left:723px;top:282px;height:17px;line-height:17px;font-weight:bold;color:#2020ae;letter-spacing:0.4px">RegisterVerifyWorker</div><div class="t" style="left:907px;top:282px;height:17px;line-height:17px;">7ff76f0bd2c</div><svg style="left:1000px;top:284px" width="15" height="13" viewBox="0 0 15 13"><rect x="0.5" y="0.5" width="14" height="12" rx="1" fill="#fff" stroke="#6d88ab"/><rect x="1" y="1" width="13" height="2" fill="#85a5d0"/><path d="M2.5 4.8H3.5M5 4.8H8M9.5 4.8H10.5M11.5 4.8H13M2.5 6.8H3.5M5 6.8H8M9.5 6.8H10.5M11.5 6.8H13M2.5 8.8H3.5M5 8.8H8M9.5 8.8H10.5M11.5 8.8H13M2.5 10.8H3.5M5 10.8H8M9.5 10.8H10.5M11.5 10.8H13" stroke="#9aa6b8" stroke-width="1"/></svg><div class="t" style="left:1019px;top:282px;height:17px;line-height:17px;">2</div><div class="t" style="left:1045px;top:282px;height:17px;line-height:17px;">NPackageIns...</div><div class="t" style="left:1133px;top:282px;height:17px;line-height:17px;font-weight:bold;color:#2020ae;letter-spacing:0.35px">RegisterVerifyW...</div><div class="t" style="left:1246px;top:282px;height:17px;line-height:17px;">7ff76f0bd70</div><div class="t" style="right:191px;top:282px;height:17px;line-height:17px;text-align:right;">47</div><div class="t" style="right:132px;top:282px;height:17px;line-height:17px;text-align:right;">47</div><div class="t" style="left:1465px;top:282px;height:17px;line-height:17px;">Combined Functi...</div><div class="t" style="right:1429px;top:299px;height:17px;line-height:17px;text-align:right;">14</div><svg style="left:184px;top:299px" width="20" height="17" viewBox="0 0 20 17"><rect x="0" y="0.5" width="1.3" height="15.5" fill="#2a3a2a"/><path d="M1.2 1.5L10.5 3.5L6 5.5L10 7.5L1.2 9Z" fill="#3fae3f"/><path d="M1.2 1.5L10.5 3.5L6 5.5Z" fill="#74d06a"/><rect x="1.3" y="15" width="8" height="1" fill="#c7c7d7"/><path d="M15 12L18.6 17.5H11.4Z" fill="#fbe7a0" stroke="#e2b44a" stroke-width="0.8"/><rect x="14.6" y="13.6" width="0.9" height="2.2" fill="#8a7030"/></svg><div class="t" style="left:223px;top:299px;height:17px;line-height:17px;letter-spacing:-0.2px">Function</div><div class="t" style="left:308px;top:299px;height:17px;line-height:17px;">1.000</div><div class="t" style="left:379px;top:299px;height:17px;line-height:17px;">2.614</div><div class="t" style="right:1090px;top:299px;height:17px;line-height:17px;text-align:right;">1</div><div class="t" style="right:1036px;top:299px;height:17px;line-height:17px;text-align:right;">0</div><svg style="left:572px;top:301px" width="15" height="13" viewBox="0 0 15 13"><rect x="0.5" y="0.5" width="14" height="12" rx="1" fill="#fff" stroke="#6d88ab"/><rect x="1" y="1" width="13" height="2" fill="#85a5d0"/><path d="M2.5 4.8H3.5M5 4.8H8M9.5 4.8H10.5M11.5 4.8H13M2.5 6.8H3.5M5 6.8H8M9.5 6.8H10.5M11.5 6.8H13M2.5 8.8H3.5M5 8.8H8M9.5 8.8H10.5M11.5 8.8H13M2.5 10.8H3.5M5 10.8H8M9.5 10.8H10.5M11.5 10.8H13" stroke="#9aa6b8" stroke-width="1"/></svg><div class="t" style="left:592px;top:299px;height:17px;line-height:17px;">2</div><div class="t" style="left:618px;top:299px;height:17px;line-height:17px;">Global</div><div class="t" style="left:723px;top:299px;height:17px;line-height:17px;font-weight:bold;color:#2020ae;letter-spacing:0.4px">SplIsValidDevmode&lt;struct_...</div><div class="t" style="left:907px;top:299px;height:17px;line-height:17px;">7ff76f9c8e0</div><svg style="left:1000px;top:301px" width="15" height="13" viewBox="0 0 15 13"><rect x="0.5" y="0.5" width="14" height="12" rx="1" fill="#fff" stroke="#6d88ab"/><rect x="1" y="1" width="13" height="2" fill="#85a5d0"/><path d="M2.5 4.8H3.5M5 4.8H8M9.5 4.8H10.5M11.5 4.8H13M2.5 6.8H3.5M5 6.8H8M9.5 6.8H10.5M11.5 6.8H13M2.5 8.8H3.5M5 8.8H8M9.5 8.8H10.5M11.5 8.8H13M2.5 10.8H3.5M5 10.8H8M9.5 10.8H10.5M11.5 10.8H13" stroke="#9aa6b8" stroke-width="1"/></svg><div class="t" style="left:1019px;top:299px;height:17px;line-height:17px;">2</div><div class="t" style="left:1045px;top:299px;height:17px;line-height:17px;">Global</div><div class="t" style="left:1133px;top:299px;height:17px;line-height:17px;font-weight:bold;color:#2020ae;letter-spacing:0.35px">SplIsValidDevm...</div><div class="t" style="left:1246px;top:299px;height:17px;line-height:17px;">7ff76f9cb40</div><div class="t" style="right:191px;top:299px;height:17px;line-height:17px;text-align:right;">77</div><div class="t" style="right:132px;top:299px;height:17px;line-height:17px;text-align:right;">77</div><div class="t" style="left:1465px;top:299px;height:17px;line-height:17px;">Combined Functi...</div><div class="t" style="right:1429px;top:316px;height:17px;line-height:17px;text-align:right;">14</div><svg style="left:184px;top:316px" width="20" height="17" viewBox="0 0 20 17"><rect x="0" y="0.5" width="1.3" height="15.5" fill="#2a3a2a"/><path d="M1.2 1.5L10.5 3.5L6 5.5L10 7.5L1.2 9Z" fill="#3fae3f"/><path d="M1.2 1.5L10.5 3.5L6 5.5Z" fill="#74d06a"/><rect x="1.3" y="15" width="8" height="1" fill="#c7c7d7"/><path d="M15 12L18.6 17.5H11.4Z" fill="#fbe7a0" stroke="#e2b44a" stroke-width="0.8"/><rect x="14.6" y="13.6" width="0.9" height="2.2" fill="#8a7030"/></svg><div class="t" style="left:223px;top:316px;height:17px;line-height:17px;letter-spacing:-0.2px">Function</div><div class="t" style="left:308px;top:316px;height:17px;line-height:17px;">1.000</div><div class="t" style="left:379px;top:316px;height:17px;line-height:17px;">2.166</div><div class="t" style="right:1090px;top:316px;height:17px;line-height:17px;text-align:right;">0</div><div class="t" style="right:1036px;top:316px;height:17px;line-height:17px;text-align:right;">0</div><svg style="left:572px;top:318px" width="15" height="13" viewBox="0 0 15 13"><rect x="0.5" y="0.5" width="14" height="12" rx="1" fill="#fff" stroke="#6d88ab"/><rect x="1" y="1" width="13" height="2" fill="#85a5d0"/><path d="M2.5 4.8H3.5M5 4.8H8M9.5 4.8H10.5M11.5 4.8H13M2.5 6.8H3.5M5 6.8H8M9.5 6.8H10.5M11.5 6.8H13M2.5 8.8H3.5M5 8.8H8M9.5 8.8H10.5M11.5 8.8H13M2.5 10.8H3.5M5 10.8H8M9.5 10.8H10.5M11.5 10.8H13" stroke="#9aa6b8" stroke-width="1"/></svg><div class="t" style="left:592px;top:316px;height:17px;line-height:17px;">2</div><div class="t" style="left:618px;top:316px;height:17px;line-height:17px;">NAsyncNotifyLoc...</div><div class="t" style="left:723px;top:316px;height:17px;line-height:17px;font-weight:bold;color:#2020ae;letter-spacing:0.4px">UnregisterForNotifications`a...</div><div class="t" style="left:907px;top:316px;height:17px;line-height:17px;">7ff76fa6184</div><svg style="left:1000px;top:318px" width="15" height="13" viewBox="0 0 15 13"><rect x="0.5" y="0.5" width="14" height="12" rx="1" fill="#fff" stroke="#6d88ab"/><rect x="1" y="1" width="13" height="2" fill="#85a5d0"/><path d="M2.5 4.8H3.5M5 4.8H8M9.5 4.8H10.5M11.5 4.8H13M2.5 6.8H3.5M5 6.8H8M9.5 6.8H10.5M11.5 6.8H13M2.5 8.8H3.5M5 8.8H8M9.5 8.8H10.5M11.5 8.8H13M2.5 10.8H3.5M5 10.8H8M9.5 10.8H10.5M11.5 10.8H13" stroke="#9aa6b8" stroke-width="1"/></svg><div class="t" style="left:1019px;top:316px;height:17px;line-height:17px;">2</div><div class="t" style="left:1045px;top:316px;height:17px;line-height:17px;">NAsyncNotify...</div><div class="t" style="left:1133px;top:316px;height:17px;line-height:17px;font-weight:bold;color:#2020ae;letter-spacing:0.35px">UnregisterForNo...</div><div class="t" style="left:1246px;top:316px;height:17px;line-height:17px;">7ff76fa63d4</div><div class="t" style="right:191px;top:316px;height:17px;line-height:17px;text-align:right;">9</div><div class="t" style="right:132px;top:316px;height:17px;line-height:17px;text-align:right;">9</div><div class="t" style="left:1465px;top:316px;height:17px;line-height:17px;">Combined Functi...</div><div class="t" style="right:1429px;top:333px;height:17px;line-height:17px;text-align:right;">14</div><svg style="left:184px;top:333px" width="20" height="17" viewBox="0 0 20 17"><rect x="0" y="0.5" width="1.3" height="15.5" fill="#2a3a2a"/><path d="M1.2 1.5L10.5 3.5L6 5.5L10 7.5L1.2 9Z" fill="#3fae3f"/><path d="M1.2 1.5L10.5 3.5L6 5.5Z" fill="#74d06a"/><rect x="1.3" y="15" width="8" height="1" fill="#c7c7d7"/><path d="M8.5 11.5L10.8 14.5L15.2 8.5" fill="none" stroke="#1e8a4a" stroke-width="2"/></svg><div class="t" style="left:223px;top:333px;height:17px;line-height:17px;letter-spacing:-0.2px">Function</div><div class="t" style="left:308px;top:333px;height:17px;line-height:17px;">1.000</div><div class="t" style="left:379px;top:333px;height:17px;line-height:17px;">2.955</div><div class="t" style="right:1090px;top:333px;height:17px;line-height:17px;text-align:right;">1</div><div class="t" style="right:1036px;top:333px;height:17px;line-height:17px;text-align:right;">0</div><div class="t" style="left:618px;top:333px;height:17px;line-height:17px;">Global</div><div class="t" style="left:723px;top:333px;height:17px;line-height:17px;font-weight:bold;color:#2020ae;letter-spacing:0.4px">StrCatPrefixMsz</div><div class="t" style="left:907px;top:333px;height:17px;line-height:17px;">7ff76f61670</div><div class="t" style="left:1045px;top:333px;height:17px;line-height:17px;">Global</div><div class="t" style="left:1133px;top:333px;height:17px;line-height:17px;font-weight:bold;color:#2020ae;letter-spacing:0.35px">StrCatPrefixMsz</div><div class="t" style="left:1246px;top:333px;height:17px;line-height:17px;">7ff76f617d8</div><div class="t" style="right:191px;top:333px;height:17px;line-height:17px;text-align:right;">376</div><div class="t" style="right:132px;top:333px;height:17px;line-height:17px;text-align:right;">376</div><div class="t" style="left:1465px;top:333px;height:17px;line-height:17px;">Combined Functi...</div><div class="t" style="right:1429px;top:350px;height:17px;line-height:17px;text-align:right;">14</div><svg style="left:184px;top:350px" width="20" height="17" viewBox="0 0 20 17"><rect x="0" y="0.5" width="1.3" height="15.5" fill="#2a3a2a"/><path d="M1.2 1.5L10.5 3.5L6 5.5L10 7.5L1.2 9Z" fill="#3fae3f"/><path d="M1.2 1.5L10.5 3.5L6 5.5Z" fill="#74d06a"/><rect x="1.3" y="15" width="8" height="1" fill="#c7c7d7"/><path d="M15 12L18.6 17.5H11.4Z" fill="#fbe7a0" stroke="#e2b44a" stroke-width="0.8"/><rect x="14.6" y="13.6" width="0.9" height="2.2" fill="#8a7030"/></svg><div class="t" style="left:223px;top:350px;height:17px;line-height:17px;letter-spacing:-0.2px">Function</div><div class="t" style="left:308px;top:350px;height:17px;line-height:17px;">0.989</div><div class="t" style="left:379px;top:350px;height:17px;line-height:17px;">2.782</div><div class="t" style="right:1090px;top:350px;height:17px;line-height:17px;text-align:right;">1</div><div class="t" style="right:1036px;top:350px;height:17px;line-height:17px;text-align:right;">0</div><svg style="left:572px;top:352px" width="15" height="13" viewBox="0 0 15 13"><rect x="0.5" y="0.5" width="14" height="12" rx="1" fill="#fff" stroke="#6d88ab"/><rect x="1" y="1" width="13" height="2" fill="#85a5d0"/><path d="M2.5 4.8H3.5M5 4.8H8M9.5 4.8H10.5M11.5 4.8H13M2.5 6.8H3.5M5 6.8H8M9.5 6.8H10.5M11.5 6.8H13M2.5 8.8H3.5M5 8.8H8M9.5 8.8H10.5M11.5 8.8H13M2.5 10.8H3.5M5 10.8H8M9.5 10.8H10.5M11.5 10.8H13" stroke="#9aa6b8" stroke-width="1"/></svg><div class="t" style="left:592px;top:350px;height:17px;line-height:17px;">2</div><div class="t" style="left:618px;top:350px;height:17px;line-height:17px;">Global</div><div class="t" style="left:723px;top:350px;height:17px;line-height:17px;font-weight:bold;color:#2020ae;letter-spacing:0.4px">SpoolerTraceEventWrite</div><div class="t" style="left:907px;top:350px;height:17px;line-height:17px;">7ff76f9e03c</div><svg style="left:1000px;top:352px" width="15" height="13" viewBox="0 0 15 13"><rect x="0.5" y="0.5" width="14" height="12" rx="1" fill="#fff" stroke="#6d88ab"/><rect x="1" y="1" width="13" height="2" fill="#85a5d0"/><path d="M2.5 4.8H3.5M5 4.8H8M9.5 4.8H10.5M11.5 4.8H13M2.5 6.8H3.5M5 6.8H8M9.5 6.8H10.5M11.5 6.8H13M2.5 8.8H3.5M5 8.8H8M9.5 8.8H10.5M11.5 8.8H13M2.5 10.8H3.5M5 10.8H8M9.5 10.8H10.5M11.5 10.8H13" stroke="#9aa6b8" stroke-width="1"/></svg><div class="t" style="left:1019px;top:350px;height:17px;line-height:17px;">2</div><div class="t" style="left:1045px;top:350px;height:17px;line-height:17px;">Global</div><div class="t" style="left:1133px;top:350px;height:17px;line-height:17px;font-weight:bold;color:#2020ae;letter-spacing:0.35px">SpoolerTraceEv...</div><div class="t" style="left:1246px;top:350px;height:17px;line-height:17px;">7ff76f9e290</div><div class="t" style="right:191px;top:350px;height:17px;line-height:17px;text-align:right;">250</div><div class="t" style="right:132px;top:350px;height:17px;line-height:17px;text-align:right;">250</div><div class="t" style="left:1465px;top:350px;height:17px;line-height:17px;">Combined Functi...</div><div class="t" style="right:1429px;top:367px;height:17px;line-height:17px;text-align:right;">14</div><svg style="left:184px;top:367px" width="20" height="17" viewBox="0 0 20 17"><rect x="0" y="0.5" width="1.3" height="15.5" fill="#2a3a2a"/><path d="M1.2 1.5L10.5 3.5L6 5.5L10 7.5L1.2 9Z" fill="#3fae3f"/><path d="M1.2 1.5L10.5 3.5L6 5.5Z" fill="#74d06a"/><rect x="1.3" y="15" width="8" height="1" fill="#c7c7d7"/><path d="M15 12L18.6 17.5H11.4Z" fill="#fbe7a0" stroke="#e2b44a" stroke-width="0.8"/><rect x="14.6" y="13.6" width="0.9" height="2.2" fill="#8a7030"/></svg><div class="t" style="left:223px;top:367px;height:17px;line-height:17px;letter-spacing:-0.2px">Function</div><div class="t" style="left:308px;top:367px;height:17px;line-height:17px;">1.000</div><div class="t" style="left:379px;top:367px;height:17px;line-height:17px;">2.929</div><div class="t" style="right:1090px;top:367px;height:17px;line-height:17px;text-align:right;">2</div><div class="t" style="right:1036px;top:367px;height:17px;line-height:17px;text-align:right;">0</div><svg style="left:572px;top:369px" width="15" height="13" viewBox="0 0 15 13"><rect x="0.5" y="0.5" width="14" height="12" rx="1" fill="#fff" stroke="#6d88ab"/><rect x="1" y="1" width="13" height="2" fill="#85a5d0"/><path d="M2.5 4.8H3.5M5 4.8H8M9.5 4.8H10.5M11.5 4.8H13M2.5 6.8H3.5M5 6.8H8M9.5 6.8H10.5M11.5 6.8H13M2.5 8.8H3.5M5 8.8H8M9.5 8.8H10.5M11.5 8.8H13M2.5 10.8H3.5M5 10.8H8M9.5 10.8H10.5M11.5 10.8H13" stroke="#9aa6b8" stroke-width="1"/></svg><div class="t" style="left:592px;top:367px;height:17px;line-height:17px;">2</div><div class="t" style="left:618px;top:367px;height:17px;line-height:17px;">Global</div><div class="t" style="left:723px;top:367px;height:17px;line-height:17px;font-weight:bold;color:#2020ae;letter-spacing:0.4px">CheckDriverAttributes</div><div class="t" style="left:907px;top:367px;height:17px;line-height:17px;">7ff76f1cfa0</div><svg style="left:1000px;top:369px" width="15" height="13" viewBox="0 0 15 13"><rect x="0.5" y="0.5" width="14" height="12" rx="1" fill="#fff" stroke="#6d88ab"/><rect x="1" y="1" width="13" height="2" fill="#85a5d0"/><path d="M2.5 4.8H3.5M5 4.8H8M9.5 4.8H10.5M11.5 4.8H13M2.5 6.8H3.5M5 6.8H8M9.5 6.8H10.5M11.5 6.8H13M2.5 8.8H3.5M5 8.8H8M9.5 8.8H10.5M11.5 8.8H13M2.5 10.8H3.5M5 10.8H8M9.5 10.8H10.5M11.5 10.8H13" stroke="#9aa6b8" stroke-width="1"/></svg><div class="t" style="left:1019px;top:367px;height:17px;line-height:17px;">2</div><div class="t" style="left:1045px;top:367px;height:17px;line-height:17px;">Global</div><div class="t" style="left:1133px;top:367px;height:17px;line-height:17px;font-weight:bold;color:#2020ae;letter-spacing:0.35px">CheckDriverAttr...</div><div class="t" style="left:1246px;top:367px;height:17px;line-height:17px;">7ff76f1d024</div><div class="t" style="right:191px;top:367px;height:17px;line-height:17px;text-align:right;">321</div><div class="t" style="right:132px;top:367px;height:17px;line-height:17px;text-align:right;">321</div><div class="t" style="left:1465px;top:367px;height:17px;line-height:17px;">Combined Functi...</div><div class="t" style="right:1429px;top:384px;height:17px;line-height:17px;text-align:right;">14</div><svg style="left:184px;top:384px" width="20" height="17" viewBox="0 0 20 17"><rect x="0" y="0.5" width="1.3" height="15.5" fill="#2a3a2a"/><path d="M1.2 1.5L10.5 3.5L6 5.5L10 7.5L1.2 9Z" fill="#3fae3f"/><path d="M1.2 1.5L10.5 3.5L6 5.5Z" fill="#74d06a"/><rect x="1.3" y="15" width="8" height="1" fill="#c7c7d7"/><path d="M8.5 11.5L10.8 14.5L15.2 8.5" fill="none" stroke="#1e8a4a" stroke-width="2"/></svg><div class="t" style="left:223px;top:384px;height:17px;line-height:17px;letter-spacing:-0.2px">Function</div><div class="t" style="left:308px;top:384px;height:17px;line-height:17px;">1.000</div><div class="t" style="left:379px;top:384px;height:17px;line-height:17px;">2.225</div><div class="t" style="right:1090px;top:384px;height:17px;line-height:17px;text-align:right;">4</div><div class="t" style="right:1036px;top:384px;height:17px;line-height:17px;text-align:right;">138</div><div class="t" style="left:618px;top:384px;height:17px;line-height:17px;">Global</div><div class="t" style="left:723px;top:384px;height:17px;line-height:17px;font-weight:bold;color:#2020ae;letter-spacing:0.4px">__imp_load_WSAStartup</div><div class="t" style="left:907px;top:384px;height:17px;line-height:17px;">7ff76f19c34</div><div class="t" style="left:1045px;top:384px;height:17px;line-height:17px;">Global</div><div class="t" style="left:1133px;top:384px;height:17px;line-height:17px;font-weight:bold;color:#2020ae;letter-spacing:0.35px">__imp_load_WS...</div><div class="t" style="left:1246px;top:384px;height:17px;line-height:17px;">7ff76f19cc4</div><div class="t" style="right:191px;top:384px;height:17px;line-height:17px;text-align:right;">12</div><div class="t" style="right:132px;top:384px;height:17px;line-height:17px;text-align:right;">12</div><div class="t" style="left:1465px;top:384px;height:17px;line-height:17px;">Combined Functi...</div><div class="t" style="right:1429px;top:401px;height:17px;line-height:17px;text-align:right;">14</div><svg style="left:184px;top:401px" width="20" height="17" viewBox="0 0 20 17"><rect x="0" y="0.5" width="1.3" height="15.5" fill="#2a3a2a"/><path d="M1.2 1.5L10.5 3.5L6 5.5L10 7.5L1.2 9Z" fill="#3fae3f"/><path d="M1.2 1.5L10.5 3.5L6 5.5Z" fill="#74d06a"/><rect x="1.3" y="15" width="8" height="1" fill="#c7c7d7"/><path d="M15 12L18.6 17.5H11.4Z" fill="#fbe7a0" stroke="#e2b44a" stroke-width="0.8"/><rect x="14.6" y="13.6" width="0.9" height="2.2" fill="#8a7030"/></svg><div class="t" style="left:223px;top:401px;height:17px;line-height:17px;letter-spacing:-0.2px">Function</div><div class="t" style="left:308px;top:401px;height:17px;line-height:17px;">1.000</div><div class="t" style="left:379px;top:401px;height:17px;line-height:17px;">2.855</div><div class="t" style="right:1090px;top:401px;height:17px;line-height:17px;text-align:right;">1</div><div class="t" style="right:1036px;top:401px;height:17px;line-height:17px;text-align:right;">0</div><svg style="left:572px;top:403px" width="15" height="13" viewBox="0 0 15 13"><rect x="0.5" y="0.5" width="14" height="12" rx="1" fill="#fff" stroke="#6d88ab"/><rect x="1" y="1" width="13" height="2" fill="#85a5d0"/><path d="M2.5 4.8H3.5M5 4.8H8M9.5 4.8H10.5M11.5 4.8H13M2.5 6.8H3.5M5 6.8H8M9.5 6.8H10.5M11.5 6.8H13M2.5 8.8H3.5M5 8.8H8M9.5 8.8H10.5M11.5 8.8H13M2.5 10.8H3.5M5 10.8H8M9.5 10.8H10.5M11.5 10.8H13" stroke="#9aa6b8" stroke-width="1"/></svg><div class="t" style="left:592px;top:401px;height:17px;line-height:17px;">2</div><div class="t" style="left:618px;top:401px;height:17px;line-height:17px;">Global</div><div class="t" style="left:723px;top:401px;height:17px;line-height:17px;font-weight:bold;color:#2020ae;letter-spacing:0.4px">CreateFilePool</div><div class="t" style="left:907px;top:401px;height:17px;line-height:17px;">7ff76f153d8</div><svg style="left:1000px;top:403px" width="15" height="13" viewBox="0 0 15 13"><rect x="0.5" y="0.5" width="14" height="12" rx="1" fill="#fff" stroke="#6d88ab"/><rect x="1" y="1" width="13" height="2" fill="#85a5d0"/><path d="M2.5 4.8H3.5M5 4.8H8M9.5 4.8H10.5M11.5 4.8H13M2.5 6.8H3.5M5 6.8H8M9.5 6.8H10.5M11.5 6.8H13M2.5 8.8H3.5M5 8.8H8M9.5 8.8H10.5M11.5 8.8H13M2.5 10.8H3.5M5 10.8H8M9.5 10.8H10.5M11.5 10.8H13" stroke="#9aa6b8" stroke-width="1"/></svg><div class="t" style="left:1019px;top:401px;height:17px;line-height:17px;">2</div><div class="t" style="left:1045px;top:401px;height:17px;line-height:17px;">Global</div><div class="t" style="left:1133px;top:401px;height:17px;line-height:17px;font-weight:bold;color:#2020ae;letter-spacing:0.35px">CreateFilePool</div><div class="t" style="left:1246px;top:401px;height:17px;line-height:17px;">7ff76f15420</div><div class="t" style="right:191px;top:401px;height:17px;line-height:17px;text-align:right;">434</div><div class="t" style="right:132px;top:401px;height:17px;line-height:17px;text-align:right;">434</div><div class="t" style="left:1465px;top:401px;height:17px;line-height:17px;">Combined Functi...</div><div class="t" style="right:1429px;top:418px;height:17px;line-height:17px;text-align:right;">14</div><svg style="left:184px;top:418px" width="20" height="17" viewBox="0 0 20 17"><rect x="0" y="0.5" width="1.3" height="15.5" fill="#2a3a2a"/><path d="M1.2 1.5L10.5 3.5L6 5.5L10 7.5L1.2 9Z" fill="#3fae3f"/><path d="M1.2 1.5L10.5 3.5L6 5.5Z" fill="#74d06a"/><rect x="1.3" y="15" width="8" height="1" fill="#c7c7d7"/><path d="M15 12L18.6 17.5H11.4Z" fill="#fbe7a0" stroke="#e2b44a" stroke-width="0.8"/><rect x="14.6" y="13.6" width="0.9" height="2.2" fill="#8a7030"/></svg><div class="t" style="left:223px;top:418px;height:17px;line-height:17px;letter-spacing:-0.2px">Function</div><div class="t" style="left:308px;top:418px;height:17px;line-height:17px;">1.000</div><div class="t" style="left:379px;top:418px;height:17px;line-height:17px;">2.317</div><div class="t" style="right:1090px;top:418px;height:17px;line-height:17px;text-align:right;">2</div><div class="t" style="right:1036px;top:418px;height:17px;line-height:17px;text-align:right;">0</div><svg style="left:572px;top:420px" width="15" height="13" viewBox="0 0 15 13"><rect x="0.5" y="0.5" width="14" height="12" rx="1" fill="#fff" stroke="#6d88ab"/><rect x="1" y="1" width="13" height="2" fill="#85a5d0"/><path d="M2.5 4.8H3.5M5 4.8H8M9.5 4.8H10.5M11.5 4.8H13M2.5 6.8H3.5M5 6.8H8M9.5 6.8H10.5M11.5 6.8H13M2.5 8.8H3.5M5 8.8H8M9.5 8.8H10.5M11.5 8.8H13M2.5 10.8H3.5M5 10.8H8M9.5 10.8H10.5M11.5 10.8H13" stroke="#9aa6b8" stroke-width="1"/></svg><div class="t" style="left:592px;top:418px;height:17px;line-height:17px;">2</div><div class="t" style="left:618px;top:418px;height:17px;line-height:17px;">NCOMLibrary::C...</div><div class="t" style="left:723px;top:418px;height:17px;line-height:17px;font-weight:bold;color:#2020ae;letter-spacing:0.4px">~ComLeakCleaner</div><div class="t" style="left:907px;top:418px;height:17px;line-height:17px;">7ff76f2a8fc</div><svg style="left:1000px;top:420px" width="15" height="13" viewBox="0 0 15 13"><rect x="0.5" y="0.5" width="14" height="12" rx="1" fill="#fff" stroke="#6d88ab"/><rect x="1" y="1" width="13" height="2" fill="#85a5d0"/><path d="M2.5 4.8H3.5M5 4.8H8M9.5 4.8H10.5M11.5 4.8H13M2.5 6.8H3.5M5 6.8H8M9.5 6.8H10.5M11.5 6.8H13M2.5 8.8H3.5M5 8.8H8M9.5 8.8H10.5M11.5 8.8H13M2.5 10.8H3.5M5 10.8H8M9.5 10.8H10.5M11.5 10.8H13" stroke="#9aa6b8" stroke-width="1"/></svg><div class="t" style="left:1019px;top:418px;height:17px;line-height:17px;">2</div><div class="t" style="left:1045px;top:418px;height:17px;line-height:17px;">NCOMLibrary...</div><div class="t" style="left:1133px;top:418px;height:17px;line-height:17px;font-weight:bold;color:#2020ae;letter-spacing:0.35px">~ComLeakClean...</div><div class="t" style="left:1246px;top:418px;height:17px;line-height:17px;">7ff76f2a9c0</div><div class="t" style="right:191px;top:418px;height:17px;line-height:17px;text-align:right;">2</div><div class="t" style="right:132px;top:418px;height:17px;line-height:17px;text-align:right;">2</div><div class="t" style="left:1465px;top:418px;height:17px;line-height:17px;">Combined Functi...</div><div style="left:5px;top:110px;width:1562px;height:19px;background:linear-gradient(180deg,#f9f9f9 0%,#ffffff 15%,#ececec 45%,#dedede 62%,#f3f3f3 90%,#f7f7f7 100%)"></div><div class="t" style="left:9px;top:110px;height:19px;line-height:19px;letter-spacing:-0.25px">Tag</div><div class="t" style="left:112px;top:110px;height:19px;line-height:19px;letter-spacing:-0.25px">Sessio...</div><div class="t" style="left:167px;top:110px;height:19px;line-height:19px;letter-spacing:-0.25px">Status</div><div class="t" style="left:222px;top:110px;height:19px;line-height:19px;letter-spacing:-0.25px">Type</div><div class="t" style="left:307px;top:110px;height:19px;line-height:19px;letter-spacing:-0.25px">Score</div><div class="t" style="left:378px;top:110px;height:19px;line-height:19px;letter-spacing:-0.25px">Confidenc...</div><div class="t" style="left:450px;top:110px;height:19px;line-height:19px;letter-spacing:-0.25px">Votes</div><div class="t" style="left:506px;top:110px;height:19px;line-height:19px;letter-spacing:-0.25px"># Con...</div><div class="t" style="left:561px;top:110px;height:19px;line-height:19px;letter-spacing:-0.25px">Multipl...</div><div class="t" style="left:618px;top:110px;height:19px;line-height:19px;letter-spacing:-0.25px">Source Namespace</div><div class="t" style="left:722px;top:110px;height:19px;line-height:19px;letter-spacing:-0.25px">Source Label</div><div class="t" style="left:906px;top:110px;height:19px;line-height:19px;letter-spacing:-0.25px">Source Addr...</div><div class="t" style="left:990px;top:110px;height:19px;line-height:19px;letter-spacing:-0.25px">Multipl...</div><div class="t" style="left:1045px;top:110px;height:19px;line-height:19px;letter-spacing:-0.25px">Dest Namesp...</div><div class="t" style="left:1132px;top:110px;height:19px;line-height:19px;letter-spacing:-0.25px">Dest Label</div><div class="t" style="left:1245px;top:110px;height:19px;line-height:19px;letter-spacing:-0.25px">Dest Address</div><div class="t" style="left:1326px;top:110px;height:19px;line-height:19px;letter-spacing:-0.25px">Source Length</div><div class="t" style="left:1406px;top:110px;height:19px;line-height:19px;letter-spacing:-0.25px">Dest Le...</div><div style="left:1461px;top:110px;width:106px;height:19px;background:linear-gradient(180deg,#dcecfa 0%,#c2dcf5 28%,#9fc8ef 55%,#8dbdea 75%,#a6cdf0 100%)"></div><svg style="left:1551px;top:113px" width="13" height="13" viewBox="0 0 13 13"><path d="M1.5 0.8H3.5V3.5H5.5V6H7.5V8.5H10V10.5H12.2V12.2H1.5Z" fill="#fff" stroke="#4a4a4a" stroke-width="0.9"/><path d="M2.2 4.3H5M2.2 6.8H7.2M2.2 9.3H9.5M2.2 11.3H11.5" stroke="#b0b0b0" stroke-width="0.9"/></svg><div class="t" style="left:1465px;top:110px;height:19px;line-height:19px;letter-spacing:-0.25px">Algorithm</div><div style="left:108px;top:110px;width:1px;height:19px;background:#9a9a9a"></div><div style="left:109px;top:110px;width:1px;height:19px;background:#ffffff"></div><div style="left:163px;top:110px;width:1px;height:19px;background:#9a9a9a"></div><div style="left:164px;top:110px;width:1px;height:19px;background:#ffffff"></div><div style="left:218px;top:110px;width:1px;height:19px;background:#9a9a9a"></div><div style="left:219px;top:110px;width:1px;height:19px;background:#ffffff"></div><div style="left:303px;top:110px;width:1px;height:19px;background:#9a9a9a"></div><div style="left:304px;top:110px;width:1px;height:19px;background:#ffffff"></div><div style="left:374px;top:110px;width:1px;height:19px;background:#9a9a9a"></div><div style="left:375px;top:110px;width:1px;height:19px;background:#ffffff"></div><div style="left:446px;top:110px;width:1px;height:19px;background:#9a9a9a"></div><div style="left:447px;top:110px;width:1px;height:19px;background:#ffffff"></div><div style="left:502px;top:110px;width:1px;height:19px;background:#9a9a9a"></div><div style="left:503px;top:110px;width:1px;height:19px;background:#ffffff"></div><div style="left:557px;top:110px;width:1px;height:19px;background:#9a9a9a"></div><div style="left:558px;top:110px;width:1px;height:19px;background:#ffffff"></div><div style="left:614px;top:110px;width:1px;height:19px;background:#9a9a9a"></div><div style="left:615px;top:110px;width:1px;height:19px;background:#ffffff"></div><div style="left:718px;top:110px;width:1px;height:19px;background:#9a9a9a"></div><div style="left:719px;top:110px;width:1px;height:19px;background:#ffffff"></div><div style="left:902px;top:110px;width:1px;height:19px;background:#9a9a9a"></div><div style="left:903px;top:110px;width:1px;height:19px;background:#ffffff"></div><div style="left:986px;top:110px;width:1px;height:19px;background:#9a9a9a"></div><div style="left:987px;top:110px;width:1px;height:19px;background:#ffffff"></div><div style="left:1041px;top:110px;width:1px;height:19px;background:#9a9a9a"></div><div style="left:1042px;top:110px;width:1px;height:19px;background:#ffffff"></div><div style="left:1128px;top:110px;width:1px;height:19px;background:#9a9a9a"></div><div style="left:1129px;top:110px;width:1px;height:19px;background:#ffffff"></div><div style="left:1241px;top:110px;width:1px;height:19px;background:#9a9a9a"></div><div style="left:1242px;top:110px;width:1px;height:19px;background:#ffffff"></div><div style="left:1322px;top:110px;width:1px;height:19px;background:#9a9a9a"></div><div style="left:1323px;top:110px;width:1px;height:19px;background:#ffffff"></div><div style="left:1402px;top:110px;width:1px;height:19px;background:#9a9a9a"></div><div style="left:1403px;top:110px;width:1px;height:19px;background:#ffffff"></div><div style="left:1461px;top:110px;width:1px;height:19px;background:#9a9a9a"></div><div style="left:1462px;top:110px;width:1px;height:19px;background:#ffffff"></div><div style="left:1567px;top:110px;width:1px;height:19px;background:#9a9a9a"></div><div style="left:1568px;top:110px;width:1px;height:19px;background:#ffffff"></div><div style="left:5px;top:128px;width:1562px;height:1px;background:#8a8a8a"></div><div style="left:1567px;top:110px;width:18px;height:325px;background:#f0f0f0"></div><div style="left:1575px;top:146px;width:2px;height:12px;background:#8a8a8a"></div><div style="left:5px;top:435px;width:1579px;height:1px;background:#8a8a8a"></div><div style="left:5px;top:436px;width:1579px;height:1px;background:#a8a8a8"></div><div class="t" style="left:9px;top:437px;height:22px;line-height:22px;">Filter:</div><div style="left:41px;top:438px;width:968px;height:20px;background:#fff;border:1px solid #b5b5b5"></div><div style="left:1018px;top:437px;width:2px;height:24px;background:#a0a0a0"></div><div class="t" style="left:1026px;top:437px;height:22px;line-height:22px;letter-spacing:-0.17px">Score Filter:</div><div style="left:1092px;top:438px;width:38px;height:20px;background:#fff;border:1px solid #b5b5b5"></div><div class="t" style="left:1098px;top:437px;height:22px;line-height:22px;">0.000</div><div class="t" style="left:1134px;top:437px;height:22px;line-height:22px;">to</div><div style="left:1148px;top:438px;width:38px;height:20px;background:#fff;border:1px solid #b5b5b5"></div><div class="t" style="left:1155px;top:437px;height:22px;line-height:22px;">1.000</div><div style="left:1195px;top:437px;width:2px;height:24px;background:#a0a0a0"></div><div class="t" style="left:1204px;top:437px;height:22px;line-height:22px;letter-spacing:-0.2px">Confidence Filter:</div><div style="left:1296px;top:438px;width:38px;height:20px;background:#fff;border:1px solid #b5b5b5"></div><div class="t" style="left:1299px;top:437px;height:22px;line-height:22px;">-9.999</div><div class="t" style="left:1338px;top:437px;height:22px;line-height:22px;">to</div><div style="left:1352px;top:438px;width:38px;height:20px;background:#fff;border:1px solid #b5b5b5"></div><div class="t" style="left:1357px;top:437px;height:22px;line-height:22px;">9.999</div><div style="left:1401px;top:437px;width:2px;height:24px;background:#a0a0a0"></div><div class="t" style="left:1408px;top:437px;height:22px;line-height:22px;">Length Filter:</div><div style="left:1475px;top:438px;width:46px;height:20px;background:#fff;border:1px solid #b5b5b5"></div><div class="t" style="right:71px;top:437px;height:22px;line-height:22px;text-align:right;">0</div><div style="left:1533px;top:437px;width:46px;height:23px;background:#f3f3f3;border:1px solid #c8c8c8;border-radius:4px"></div><svg style="left:1549px;top:440px" width="14" height="17" viewBox="0 0 14 17"><circle cx="7" cy="6.5" r="5.8" fill="#fbe27a" stroke="#e0b53a"/><circle cx="5.5" cy="5" r="2" fill="#fff6c8"/><rect x="4.5" y="11.5" width="5" height="4.5" fill="#8a8a8a" stroke="#666" stroke-width="0.6"/></svg><div style="left:1px;top:461px;width:1585px;height:1px;background:#f8f8f8"></div><div style="left:1px;top:462px;width:1585px;height:1px;background:#858585"></div><div style="left:1px;top:463px;width:1585px;height:4px;background:#c9c9c9"></div><div style="left:1px;top:467px;width:1585px;height:2px;background:#fdfdfd"></div><div style="left:3px;top:469px;width:1583px;height:302px;border:1px solid #8a8a8a;background:#f0f0f0"></div><div style="left:4px;top:470px;width:1580px;height:1px;background:#fafafa"></div><div style="left:5px;top:471px;width:1579px;height:23px;background:linear-gradient(90deg,#a3a3a3 0%,#b4b4b4 25%,#c9c9c9 50%,#dcdcdc 75%,#ececec 100%)"></div><div style="left:5px;top:494px;width:1579px;height:2px;background:#8f8f8f"></div><div class="t" style="left:25px;top:471px;height:20px;line-height:20px;color:#1a1a1a;letter-spacing:-0.13px">Version Tracking Functions - [Session: CVE-2020-1048-Session1] - Source Functions - 2479 functions / Destination Functions - 2493 functions</div><svg style="left:7px;top:472px" width="16" height="18" viewBox="0 0 16 18"><rect x="5.5" y="5.5" width="9" height="11" fill="#fff" stroke="#b0b0b0"/><rect x="3.5" y="3.5" width="9" height="11" fill="#fff" stroke="#a8a8a8"/><text x="5.2" y="12.5" font-family="Liberation Serif" font-style="italic" font-weight="bold" font-size="9" fill="#c02020">f</text><path d="M0.5 0.5L5 4M3 4.5H5.5V2" fill="none" stroke="#1a2a90" stroke-width="1.5"/></svg><svg style="left:1117px;top:475px" width="15" height="14" viewBox="0 0 15 14"><path d="M5 2.5H14M5 7H14M5 11.5H14" stroke="#5a6a80" stroke-width="1.3"/><circle cx="2" cy="2.5" r="1.3" fill="#7aa0d0"/><circle cx="2" cy="7" r="1.3" fill="#7aa0d0"/><circle cx="2" cy="11.5" r="1.3" fill="#7aa0d0"/></svg><svg style="left:1139px;top:480px" width="7" height="4"><path d="M0 0H7L3.5 4Z" fill="#222"/></svg><svg style="left:1155px;top:473px" width="17" height="17" viewBox="0 0 17 17"><rect x="0.5" y="1.5" width="11" height="14" fill="#f4f6fa" stroke="#8a9ab0"/><path d="M2.5 4.5H9.5M2.5 7H9.5M2.5 9.5H8M2.5 12H8" stroke="#9aa8bb"/><path d="M12.5 2V13M9.5 10L12.5 14L15.5 10" fill="none" stroke="#3a78c8" stroke-width="1.8"/></svg><svg style="left:1177px;top:473px" width="17" height="17" viewBox="0 0 17 17"><rect x="0.5" y="1.5" width="11" height="14" fill="#f4f6fa" stroke="#8a9ab0"/><path d="M2.5 4.5H9.5M2.5 7H9.5M2.5 9.5H8M2.5 12H8" stroke="#9aa8bb"/><path d="M12.5 15V4M9.5 6L12.5 2L15.5 6" fill="none" stroke="#3a78c8" stroke-width="1.8"/></svg><div style="left:1203px;top:474px;width:1px;height:17px;background:#b0b0b0"></div><svg style="left:1212px;top:473px" width="16" height="17" viewBox="0 0 16 17"><path d="M0.7 0.7H12L15.3 4V16.3H0.7Z" fill="#fff" stroke="#111" stroke-width="1.2"/><path d="M4 3V8.3M2.8 3.8L4 3M11.5 9.5V14.8M10.3 10.3L11.5 9.5" stroke="#111" stroke-width="1.5"/><ellipse cx="8.8" cy="5.6" rx="1.7" ry="2.4" fill="none" stroke="#111" stroke-width="1.3"/><ellipse cx="5.5" cy="12.1" rx="1.7" ry="2.4" fill="none" stroke="#111" stroke-width="1.3"/></svg><svg style="left:1234px;top:474px" width="17" height="17" viewBox="0 0 17 17"><defs><radialGradient id="gc" cx="0.45" cy="0.4" r="0.6"><stop offset="0" stop-color="#9ee09a"/><stop offset="1" stop-color="#259a2a"/></radialGradient></defs><circle cx="8.5" cy="8.5" r="7.8" fill="url(#gc)" stroke="#2a7a2a" stroke-width="0.8"/><path d="M11 5.8Q10 4.5 8.5 4.5Q5 4.5 5 8.5Q5 12.5 8.5 12.5Q10 12.5 11 11.2" fill="none" stroke="#fff" stroke-width="1.9"/></svg><svg style="left:1257px;top:474px" width="17" height="17" viewBox="0 0 17 17"><path d="M8.5 0.8L16.2 8.5L8.5 16.2L0.8 8.5Z" fill="#fff" stroke="#30308a" stroke-width="1.1"/><path d="M8.5 3.5L13.5 8.5L8.5 13.5L3.5 8.5Z" fill="#f07a2a"/></svg><div style="left:1283px;top:474px;width:1px;height:17px;background:#b0b0b0"></div><div style="left:1291px;top:471px;width:21px;height:22px;background:#ececec;border-top:2px solid #8f8f8f;border-left:1px solid #a8a8a8;border-right:1px solid #f8f8f8;border-bottom:1px solid #f8f8f8"></div><div style="left:1326px;top:471px;width:21px;height:22px;background:#ececec;border-top:2px solid #8f8f8f;border-left:1px solid #a8a8a8;border-right:1px solid #f8f8f8;border-bottom:1px solid #f8f8f8"></div><div style="left:1361px;top:471px;width:21px;height:22px;background:#ececec;border-top:2px solid #8f8f8f;border-left:1px solid #a8a8a8;border-right:1px solid #f8f8f8;border-bottom:1px solid #f8f8f8"></div><svg style="left:1293px;top:474px" width="16" height="17" viewBox="0 0 16 17"><path d="M1 0.8V12L3.8 9.5L6 14.5L8 13.5L5.8 8.7H9.5Z" fill="#fff" stroke="#111" stroke-width="1"/><rect x="8.5" y="10" width="7" height="6" fill="#f7e27a" stroke="#c9a83a" stroke-width="0.7"/></svg><div style="left:1318px;top:474px;width:1px;height:17px;background:#b0b0b0"></div><svg style="left:1329px;top:474px" width="13" height="16" viewBox="0 0 13 16"><path d="M3 7V4.5Q3 1 6.5 1Q10 1 10 4.5V7" fill="none" stroke="#222" stroke-width="1.6"/><rect x="1" y="7" width="11" height="8" fill="#333"/><path d="M2.5 9H10.5M2.5 11H10.5M2.5 13H10.5" stroke="#aaa" stroke-width="0.7"/></svg><div style="left:1353px;top:474px;width:1px;height:17px;background:#b0b0b0"></div><svg style="left:1363px;top:474px" width="17" height="16" viewBox="0 0 17 16"><rect x="0.5" y="0.5" width="16" height="15" fill="#f4f8fd" stroke="#7390b8" stroke-width="1"/><rect x="1" y="1" width="15" height="2.5" fill="#b5cde8"/><path d="M8.5 1V15.5" stroke="#7390b8" stroke-width="1.2"/></svg><div style="left:1389px;top:474px;width:1px;height:17px;background:#b0b0b0"></div><svg style="left:1398px;top:475px" width="14" height="14" viewBox="0 0 14 14"><path d="M5 0.5H9V5H13.5V9H9V13.5H5V9H0.5V5H5Z" fill="#8f8f8f"/></svg><svg style="left:1421px;top:475px" width="14" height="15" viewBox="0 0 14 15"><rect x="1" y="0.5" width="1.4" height="14" fill="#a8a8a8"/><path d="M2.4 1.5H12.5L9.5 4.5L12.5 7.5H2.4Z" fill="#a8a8a8"/></svg><svg style="left:1444px;top:475px" width="15" height="14" viewBox="0 0 15 14"><path d="M1 8L5 12.5L14 1.5" fill="none" stroke="#a8a8a8" stroke-width="2.6" stroke-linejoin="round"/></svg><svg style="left:1468px;top:475px" width="15" height="15" viewBox="0 0 15 15"><path d="M1 2H14M1 4.5H14M1 7H14M1 9.5H14M1 12H14" stroke="#444" stroke-width="1.1"/></svg><div style="left:1492px;top:474px;width:1px;height:17px;background:#b0b0b0"></div><svg style="left:1501px;top:473px" width="17" height="18" viewBox="0 0 17 18"><rect x="4.5" y="3.5" width="11" height="13" fill="#fff" stroke="#b0b0b0"/><rect x="1.5" y="1.5" width="11" height="13" fill="#fff" stroke="#8a8a8a"/><text x="3.8" y="11.5" font-family="Liberation Serif" font-style="italic" font-weight="bold" font-size="11" fill="#d02020">f</text></svg><svg style="left:1524px;top:480px" width="7" height="4"><path d="M0 0H7L3.5 4Z" fill="#222"/></svg><div style="left:1536px;top:474px;width:1px;height:17px;background:#b0b0b0"></div><svg style="left:1543px;top:478px" width="12" height="7"><path d="M0 0H12L6 6.5Z" fill="#111"/></svg><svg style="left:1566px;top:476px" width="12" height="12" viewBox="0 0 12 12"><path d="M1 1L11 11M11 1L1 11" stroke="#000" stroke-width="2.2"/></svg><div style="left:5px;top:496px;width:784px;height:15px;background:#f0f0f0"></div><div class="t" style="left:8px;top:496px;height:15px;line-height:15px;letter-spacing:-0.03px">Source = WindowsPrintSpooler:/2020-04/p..ooler-core-localspl_6.1.7601.24383/localspl.dll</div><div style="left:5px;top:511px;width:784px;height:1px;background:#8f8f8f"></div><div style="left:5px;top:512px;width:767px;height:211px;background:#fff"></div><div style="left:5px;top:531px;width:767px;height:17px;background:#edf2fb"></div><div style="left:5px;top:548px;width:767px;height:17px;background:#1978d4"></div><div style="left:5px;top:565px;width:767px;height:17px;background:#edf2fb"></div><div style="left:5px;top:599px;width:767px;height:17px;background:#edf2fb"></div><div style="left:5px;top:633px;width:767px;height:17px;background:#edf2fb"></div><div style="left:5px;top:667px;width:767px;height:17px;background:#edf2fb"></div><div style="left:5px;top:701px;width:767px;height:17px;background:#edf2fb"></div><div class="t" style="left:10px;top:531px;height:17px;line-height:17px;letter-spacing:-0.1px">FUN_7ff76f01010</div><div class="t" style="left:316px;top:531px;height:17px;line-height:17px;">7ff76f01010</div><div class="t m" style="left:472px;top:532px;height:17px;line-height:17px;">undefined FUN_7ff76f01010(int param_1, ...</div><div class="t" style="left:10px;top:548px;height:17px;line-height:17px;color:#dcf4ff;letter-spacing:-0.1px">TEventWrite_Msg</div><div class="t" style="left:316px;top:548px;height:17px;line-height:17px;color:#dcf4ff;">7ff76f010e0</div><div class="t m" style="left:472px;top:549px;height:17px;line-height:17px;color:#dcf4ff;">void TEventWrite_Msg(ulong param_1, ush...</div><div class="t" style="left:10px;top:565px;height:17px;line-height:17px;letter-spacing:-0.1px">LeaveSplSem</div><div class="t" style="left:316px;top:565px;height:17px;line-height:17px;">7ff76f010ec</div><div class="t m" style="left:472px;top:566px;height:17px;line-height:17px;">undefined LeaveSplSem(undefined8 param_...</div><div class="t" style="left:10px;top:582px;height:17px;line-height:17px;letter-spacing:-0.1px">FUN_7ff76f01110</div><div class="t" style="left:316px;top:582px;height:17px;line-height:17px;">7ff76f01110</div><div class="t m" style="left:472px;top:583px;height:17px;line-height:17px;">undefined FUN_7ff76f01110(undefined8 pa...</div><div class="t" style="left:10px;top:599px;height:17px;line-height:17px;letter-spacing:-0.1px">EnterSplSem</div><div class="t" style="left:316px;top:599px;height:17px;line-height:17px;">7ff76f011b4</div><div class="t m" style="left:472px;top:600px;height:17px;line-height:17px;">undefined EnterSplSem(int param_1, usho...</div><div class="t" style="left:10px;top:616px;height:17px;line-height:17px;letter-spacing:-0.1px">__security_check_cookie</div><div class="t" style="left:316px;top:616px;height:17px;line-height:17px;">7ff76f011e0</div><div class="t m" style="left:472px;top:617px;height:17px;line-height:17px;">void __security_check_cookie(uintptr_t ...</div><div class="t" style="left:10px;top:633px;height:17px;line-height:17px;letter-spacing:-0.1px">FindSpoolerByName</div><div class="t" style="left:316px;top:633px;height:17px;line-height:17px;">7ff76f01240</div><div class="t m" style="left:472px;top:634px;height:17px;line-height:17px;">ushort * FindSpoolerByName(LPCWSTR para...</div><div class="t" style="left:10px;top:650px;height:17px;line-height:17px;letter-spacing:-0.1px">GetTokenHandle</div><div class="t" style="left:316px;top:650px;height:17px;line-height:17px;">7ff76f012b0</div><div class="t m" style="left:472px;top:651px;height:17px;line-height:17px;">undefined8 GetTokenHandle(undefined8 pa...</div><div class="t" style="left:10px;top:667px;height:17px;line-height:17px;letter-spacing:-0.1px">FUN_7ff76f01344</div><div class="t" style="left:316px;top:667px;height:17px;line-height:17px;">7ff76f01344</div><div class="t m" style="left:472px;top:668px;height:17px;line-height:17px;">undefined FUN_7ff76f01344(void * param_...</div><div class="t" style="left:10px;top:684px;height:17px;line-height:17px;letter-spacing:-0.1px">GetPrinterSize</div><div class="t" style="left:316px;top:684px;height:17px;line-height:17px;">7ff76f0159c</div><div class="t m" style="left:472px;top:685px;height:17px;line-height:17px;">uint GetPrinterSize(longlong param_1, i...</div><div class="t" style="left:10px;top:701px;height:17px;line-height:17px;letter-spacing:-0.1px">GetPrinterPorts</div><div class="t" style="left:316px;top:701px;height:17px;line-height:17px;">7ff76f017cc</div><div class="t m" style="left:472px;top:702px;height:17px;line-height:17px;">undefined GetPrinterPorts(longlong para...</div><div style="left:5px;top:512px;width:767px;height:19px;background:linear-gradient(180deg,#f9f9f9 0%,#ffffff 15%,#ececec 45%,#dedede 62%,#f3f3f3 90%,#f7f7f7 100%)"></div><div class="t" style="left:9px;top:512px;height:19px;line-height:19px;letter-spacing:-0.25px">Label</div><div style="left:310px;top:512px;width:157px;height:19px;background:linear-gradient(180deg,#dcecfa 0%,#c2dcf5 28%,#9fc8ef 55%,#8dbdea 75%,#a6cdf0 100%)"></div><svg style="left:451px;top:515px" width="13" height="13" viewBox="0 0 13 13"><path d="M1.5 0.8H3.5V3.5H5.5V6H7.5V8.5H10V10.5H12.2V12.2H1.5Z" fill="#fff" stroke="#4a4a4a" stroke-width="0.9"/><path d="M2.2 4.3H5M2.2 6.8H7.2M2.2 9.3H9.5M2.2 11.3H11.5" stroke="#b0b0b0" stroke-width="0.9"/></svg><div class="t" style="left:314px;top:512px;height:19px;line-height:19px;letter-spacing:-0.25px">Location</div><div class="t" style="left:471px;top:512px;height:19px;line-height:19px;letter-spacing:-0.25px">Function Signature</div><div style="left:310px;top:512px;width:1px;height:19px;background:#9a9a9a"></div><div style="left:311px;top:512px;width:1px;height:19px;background:#ffffff"></div><div style="left:467px;top:512px;width:1px;height:19px;background:#9a9a9a"></div><div style="left:468px;top:512px;width:1px;height:19px;background:#ffffff"></div><div style="left:772px;top:512px;width:1px;height:19px;background:#9a9a9a"></div><div style="left:773px;top:512px;width:1px;height:19px;background:#ffffff"></div><div style="left:5px;top:530px;width:767px;height:1px;background:#8a8a8a"></div><div style="left:772px;top:512px;width:17px;height:211px;background:#f0f0f0"></div><div style="left:780px;top:548px;width:2px;height:11px;background:#8a8a8a"></div><div style="left:789px;top:511px;width:1px;height:213px;background:#8a8a8a"></div><div style="left:5px;top:723px;width:785px;height:1px;background:#8a8a8a"></div><div class="t" style="left:9px;top:726px;height:21px;line-height:21px;">Filter:</div><div style="left:48px;top:727px;width:672px;height:20px;background:#fff;border:1px solid #b5b5b5"></div><svg style="left:726px;top:728px" width="16" height="16" viewBox="0 0 16 16"><path d="M1.5 0.5H10.5L15 5V15.5H1.5Z" fill="#bcd8f5" stroke="#4a90d8"/><path d="M10.5 0.5V5H15" fill="#e8f2fc" stroke="#4a90d8"/><path d="M6.5 6L3.5 9L6.5 12M8 6L11 9L8 12" fill="none" stroke="#2a70c0" stroke-width="1.4"/><path d="M3 13.5H13" stroke="#4a90d8"/></svg><svg style="left:753px;top:729px" width="15" height="14" viewBox="0 0 15 14"><path d="M0.5 2.5H14.5M0.5 7H14.5M0.5 11.5H14.5" stroke="#777" stroke-width="1.5"/><circle cx="4" cy="2.5" r="2" fill="#666"/><circle cx="11.5" cy="7" r="2" fill="#666"/><circle cx="7" cy="11.5" r="2" fill="#666"/></svg><svg style="left:777px;top:734px" width="7" height="4"><path d="M0 0H7L3.5 4Z" fill="#222"/></svg><div style="left:790px;top:496px;width:5px;height:255px;background:#f0f0f0"></div><div style="left:795px;top:496px;width:1px;height:255px;background:#7a7a7a"></div><div style="left:797px;top:496px;width:786px;height:15px;background:#f0f0f0"></div><div class="t" style="left:800px;top:496px;height:15px;line-height:15px;letter-spacing:-0.03px">Destination = WindowsPrintSpooler:/2020-05/p..ooler-core-localspl_6.1.7601.24554/localspl.dll</div><div style="left:797px;top:511px;width:786px;height:1px;background:#8f8f8f"></div><div style="left:797px;top:512px;width:768px;height:211px;background:#fff"></div><div style="left:797px;top:531px;width:768px;height:17px;background:#edf2fb"></div><div style="left:797px;top:548px;width:768px;height:17px;background:#1978d4"></div><div style="left:797px;top:565px;width:768px;height:17px;background:#edf2fb"></div><div style="left:797px;top:599px;width:768px;height:17px;background:#edf2fb"></div><div style="left:797px;top:633px;width:768px;height:17px;background:#edf2fb"></div><div style="left:797px;top:667px;width:768px;height:17px;background:#edf2fb"></div><div style="left:797px;top:701px;width:768px;height:17px;background:#edf2fb"></div><div class="t" style="left:802px;top:531px;height:17px;line-height:17px;letter-spacing:-0.1px">FUN_7ff76f01010</div><div class="t" style="left:1108px;top:531px;height:17px;line-height:17px;">7ff76f01010</div><div class="t m" style="left:1266px;top:532px;height:17px;line-height:17px;">undefined FUN_7ff76f01010(int param_1, ...</div><div class="t" style="left:802px;top:548px;height:17px;line-height:17px;color:#dcf4ff;letter-spacing:-0.1px">TEventWrite_Msg</div><div class="t" style="left:1108px;top:548px;height:17px;line-height:17px;color:#dcf4ff;">7ff76f010e0</div><div class="t m" style="left:1266px;top:549px;height:17px;line-height:17px;color:#dcf4ff;">void TEventWrite_Msg(ulong param_1, ush...</div><div class="t" style="left:802px;top:565px;height:17px;line-height:17px;letter-spacing:-0.1px">LeaveSplSem</div><div class="t" style="left:1108px;top:565px;height:17px;line-height:17px;">7ff76f010f0</div><div class="t m" style="left:1266px;top:566px;height:17px;line-height:17px;">undefined LeaveSplSem(undefined8 param_...</div><div class="t" style="left:802px;top:582px;height:17px;line-height:17px;letter-spacing:-0.1px">FUN_7ff76f01114</div><div class="t" style="left:1108px;top:582px;height:17px;line-height:17px;">7ff76f01114</div><div class="t m" style="left:1266px;top:583px;height:17px;line-height:17px;">undefined FUN_7ff76f01114(undefined8 pa...</div><div class="t" style="left:802px;top:599px;height:17px;line-height:17px;letter-spacing:-0.1px">EnterSplSem</div><div class="t" style="left:1108px;top:599px;height:17px;line-height:17px;">7ff76f011b8</div><div class="t m" style="left:1266px;top:600px;height:17px;line-height:17px;">undefined EnterSplSem(int param_1, usho...</div><div class="t" style="left:802px;top:616px;height:17px;line-height:17px;letter-spacing:-0.1px">__security_check_cookie</div><div class="t" style="left:1108px;top:616px;height:17px;line-height:17px;">7ff76f011e0</div><div class="t m" style="left:1266px;top:617px;height:17px;line-height:17px;">void __security_check_cookie(uintptr_t ...</div><div class="t" style="left:802px;top:633px;height:17px;line-height:17px;letter-spacing:-0.1px">FindSpoolerByName</div><div class="t" style="left:1108px;top:633px;height:17px;line-height:17px;">7ff76f01240</div><div class="t m" style="left:1266px;top:634px;height:17px;line-height:17px;">ushort * FindSpoolerByName(LPCWSTR para...</div><div class="t" style="left:802px;top:650px;height:17px;line-height:17px;letter-spacing:-0.1px">GetTokenHandle</div><div class="t" style="left:1108px;top:650px;height:17px;line-height:17px;">7ff76f012b0</div><div class="t m" style="left:1266px;top:651px;height:17px;line-height:17px;">undefined8 GetTokenHandle(undefined8 pa...</div><div class="t" style="left:802px;top:667px;height:17px;line-height:17px;letter-spacing:-0.1px">FUN_7ff76f01344</div><div class="t" style="left:1108px;top:667px;height:17px;line-height:17px;">7ff76f01344</div><div class="t m" style="left:1266px;top:668px;height:17px;line-height:17px;">undefined FUN_7ff76f01344(void * param_...</div><div class="t" style="left:802px;top:684px;height:17px;line-height:17px;letter-spacing:-0.1px">GetPrinterSize</div><div class="t" style="left:1108px;top:684px;height:17px;line-height:17px;">7ff76f0159c</div><div class="t m" style="left:1266px;top:685px;height:17px;line-height:17px;">uint GetPrinterSize(longlong param_1, i...</div><div class="t" style="left:802px;top:701px;height:17px;line-height:17px;letter-spacing:-0.1px">GetPrinterPorts</div><div class="t" style="left:1108px;top:701px;height:17px;line-height:17px;">7ff76f017cc</div><div class="t m" style="left:1266px;top:702px;height:17px;line-height:17px;">undefined GetPrinterPorts(longlong para...</div><div style="left:797px;top:512px;width:768px;height:19px;background:linear-gradient(180deg,#f9f9f9 0%,#ffffff 15%,#ececec 45%,#dedede 62%,#f3f3f3 90%,#f7f7f7 100%)"></div><div class="t" style="left:801px;top:512px;height:19px;line-height:19px;letter-spacing:-0.25px">Label</div><div style="left:1102px;top:512px;width:159px;height:19px;background:linear-gradient(180deg,#dcecfa 0%,#c2dcf5 28%,#9fc8ef 55%,#8dbdea 75%,#a6cdf0 100%)"></div><svg style="left:1245px;top:515px" width="13" height="13" viewBox="0 0 13 13"><path d="M1.5 0.8H3.5V3.5H5.5V6H7.5V8.5H10V10.5H12.2V12.2H1.5Z" fill="#fff" stroke="#4a4a4a" stroke-width="0.9"/><path d="M2.2 4.3H5M2.2 6.8H7.2M2.2 9.3H9.5M2.2 11.3H11.5" stroke="#b0b0b0" stroke-width="0.9"/></svg><div class="t" style="left:1106px;top:512px;height:19px;line-height:19px;letter-spacing:-0.25px">Location</div><div class="t" style="left:1265px;top:512px;height:19px;line-height:19px;letter-spacing:-0.25px">Function Signature</div><div style="left:1102px;top:512px;width:1px;height:19px;background:#9a9a9a"></div><div style="left:1103px;top:512px;width:1px;height:19px;background:#ffffff"></div><div style="left:1261px;top:512px;width:1px;height:19px;background:#9a9a9a"></div><div style="left:1262px;top:512px;width:1px;height:19px;background:#ffffff"></div><div style="left:1565px;top:512px;width:1px;height:19px;background:#9a9a9a"></div><div style="left:1566px;top:512px;width:1px;height:19px;background:#ffffff"></div><div style="left:797px;top:530px;width:768px;height:1px;background:#8a8a8a"></div><div style="left:1565px;top:512px;width:18px;height:211px;background:#f0f0f0"></div><div style="left:1573px;top:548px;width:2px;height:11px;background:#8a8a8a"></div><div style="left:1583px;top:511px;width:1px;height:213px;background:#8a8a8a"></div><div style="left:797px;top:723px;width:787px;height:1px;background:#8a8a8a"></div><div class="t" style="left:801px;top:726px;height:21px;line-height:21px;">Filter:</div><div style="left:840px;top:727px;width:673px;height:20px;background:#fff;border:1px solid #b5b5b5"></div><svg style="left:1519px;top:728px" width="16" height="16" viewBox="0 0 16 16"><path d="M1.5 0.5H10.5L15 5V15.5H1.5Z" fill="#bcd8f5" stroke="#4a90d8"/><path d="M10.5 0.5V5H15" fill="#e8f2fc" stroke="#4a90d8"/><path d="M6.5 6L3.5 9L6.5 12M8 6L11 9L8 12" fill="none" stroke="#2a70c0" stroke-width="1.4"/><path d="M3 13.5H13" stroke="#4a90d8"/></svg><svg style="left:1546px;top:729px" width="15" height="14" viewBox="0 0 15 14"><path d="M0.5 2.5H14.5M0.5 7H14.5M0.5 11.5H14.5" stroke="#777" stroke-width="1.5"/><circle cx="4" cy="2.5" r="2" fill="#666"/><circle cx="11.5" cy="7" r="2" fill="#666"/><circle cx="7" cy="11.5" r="2" fill="#666"/></svg><svg style="left:1570px;top:734px" width="7" height="4"><path d="M0 0H7L3.5 4Z" fill="#222"/></svg><div style="left:4px;top:749px;width:1581px;height:2px;background:#fbfbfb"></div><div style="left:4px;top:751px;width:1581px;height:16px;background:#ededed"></div><div style="left:4px;top:767px;width:1581px;height:2px;background:#fbfbfb"></div><div class="t" style="left:617px;top:750px;height:18px;line-height:18px;color:#b52a2a;letter-spacing:-0.09px">A match already exists between TEventWrite_Msg and TEventWrite_Msg.</div><div style="left:4px;top:769px;width:1581px;height:1px;background:#ffffff"></div><div style="left:3px;top:770px;width:1583px;height:366px;border:1px solid #8c8c8c;border-bottom:none;background:#f0f0f0"></div><div style="left:1px;top:1135px;width:1585px;height:1px;background:#7f7f7f"></div><div style="left:1px;top:1136px;width:1585px;height:1px;background:#a5a5a5"></div><div style="left:6px;top:775px;width:82px;height:18px;background:#ececec;border:1px solid #dadada;border-bottom:none"></div><div class="t" style="left:11px;top:776px;height:18px;line-height:18px;letter-spacing:-0.42px">Decompile View</div><div style="left:88px;top:772px;width:67px;height:22px;background:#f7f7f7;border:1px solid #dcdcdc;border-bottom:none"></div><div class="t" style="left:95px;top:773px;height:18px;line-height:18px;letter-spacing:-0.3px">Listing View</div><div style="left:5px;top:793px;width:1579px;height:1px;background:#fbfbfb"></div><div class="t" style="left:11px;top:795px;height:16px;line-height:16px;">Source:</div><div class="t" style="left:63px;top:795px;height:16px;line-height:16px"><b style="font-size:12px">TEventWrite_Msg()</b> in <span style="color:#333">/2020-04/p..ooler-core-localspl_6.1.7601.24383/localspl.dll</span></div><div class="t" style="left:799px;top:795px;height:16px;line-height:16px;">Destination:</div><div class="t" style="left:873px;top:795px;height:16px;line-height:16px"><b style="font-size:12px">TEventWrite_Msg()</b> in <span style="color:#333">/2020-05/p..ooler-core-localspl_6.1.7601.24554/localspl.dll</span></div><div style="left:6px;top:810px;width:785px;height:321px;border:3px solid #eaa4a8"></div><div style="left:25px;top:813px;width:764px;height:315px;border:1px solid #888;background:#f0f0f0"></div><div style="left:26px;top:814px;width:729px;height:296px;background:#e8f0fd"></div><div style="left:26px;top:814px;width:729px;height:296px;overflow:hidden"><div class="t m" style="left:200px;top:19px;height:18px;line-height:18px;color:#222;">**************************************************************</div><div class="t m" style="left:200px;top:37px;height:18px;line-height:18px;color:#222;">* void __cdecl TEventWrite_Msg(unsigned long,unsigned sho... *</div><div class="t m" style="left:200px;top:55px;height:18px;line-height:18px;color:#222;">**************************************************************</div><div class="t m" style="left:200px;top:73px;height:18px;line-height:18px;color:#222">void __fastcall <span style="color:#3434c4">TEventWrite_Msg</span>(ulong param_1, ushort * <b>…</b></div><div style="left:200px;top:74px;width:2px;height:16px;background:#d01010"></div><div class="t m" style="left:90px;top:91px;height:18px;line-height:18px;color:#256f6f;">void</div><div class="t m" style="left:218px;top:91px;height:18px;line-height:18px;color:#256f6f;">&lt;VOID&gt;</div><div class="t m" style="left:320px;top:91px;height:18px;line-height:18px;color:#336a6a;">&lt;RETURN&gt;</div><div class="t m" style="left:90px;top:109px;height:18px;line-height:18px;color:#256f6f;">ulong</div><div class="t m" style="left:218px;top:109px;height:18px;line-height:18px;color:#256f6f;">ECX:4</div><div class="t m" style="left:320px;top:109px;height:18px;line-height:18px;color:#336a6a;">param_1</div><div class="t m" style="left:90px;top:127px;height:18px;line-height:18px;color:#256f6f;">ushort *</div><div class="t m" style="left:218px;top:127px;height:18px;line-height:18px;color:#256f6f;">RDX:8</div><div class="t m" style="left:320px;top:127px;height:18px;line-height:18px;color:#336a6a;">param_2</div><div class="t m" style="left:90px;top:145px;height:18px;line-height:18px;color:#256f6f;">ulong</div><div class="t m" style="left:218px;top:145px;height:18px;line-height:18px;color:#256f6f;">R8D:4</div><div class="t m" style="left:320px;top:145px;height:18px;line-height:18px;color:#336a6a;">param_3</div><div class="t m" style="left:90px;top:163px;height:18px;line-height:18px;color:#256f6f;">char *</div><div class="t m" style="left:218px;top:163px;height:18px;line-height:18px;color:#256f6f;">R9:8</div><div class="t m" style="left:320px;top:163px;height:18px;line-height:18px;color:#336a6a;">param_4</div><div class="t m" style="left:200px;top:181px;height:18px;line-height:18px;color:#8f8f52;">?TEventWrite_Msg@@YAXKPEBGKPEAG@Z</div><div class="t m" style="left:200px;top:199px;height:18px;line-height:18px;color:#8f8f52;">?Notify@?$TConsumer@VTIniSpoolerWrapper@@@NThr</div><div class="t" style="left:522px;top:199px;height:18px;line-height:18px;color:#8f8f52;font-weight:bold;font-size:11px">…</div><div class="t m" style="left:200px;top:217px;height:18px;line-height:18px;color:#8f8f52;">?OutsidePackageLock@NPackageInstallLocalspl@@Y</div><div class="t" style="left:522px;top:217px;height:18px;line-height:18px;color:#8f8f52;font-weight:bold;font-size:11px">…</div><div class="t m" style="left:200px;top:235px;height:18px;line-height:18px;color:#8f8f52;">?Print@TANAttributes@NAsyncNotifyLocalspl@@QEA</div><div class="t" style="left:522px;top:235px;height:18px;line-height:18px;color:#8f8f52;font-weight:bold;font-size:11px">…</div><div class="t m" style="left:200px;top:253px;height:18px;line-height:18px;color:#8f8f52;">??1TErrorHandler@NDPS_UtilityLibrary@@QEAA@XZ</div><div class="t m" style="left:200px;top:271px;height:18px;line-height:18px;color:#8f8f52;">?TEventWrite_Msg@@YAXKPEBGKPEAD@Z</div><div class="t m" style="left:538px;top:181px;height:18px;line-height:18px;color:#222;">XREF[451]:</div><div class="t m" style="left:628px;top:181px;height:18px;line-height:18px;color:#222;">FUN_7ff76f01010</div><div class="t m" style="left:628px;top:199px;height:18px;line-height:18px;color:#222;">FUN_7ff76f01110</div><div class="t m" style="left:628px;top:217px;height:18px;line-height:18px;color:#222;">SplOpenPrinter</div><div class="t m" style="left:628px;top:235px;height:18px;line-height:18px;color:#222;">CreateServerHandle</div><div class="t m" style="left:628px;top:253px;height:18px;line-height:18px;color:#222;">CreateServerHandle</div><div class="t m" style="left:628px;top:271px;height:18px;line-height:18px;color:#222;">SplOpenPrinter</div><div class="t m" style="left:628px;top:289px;height:18px;line-height:18px;color:#222;">SplOpenPrinter</div><div class="t m" style="left:200px;top:289px;height:18px;line-height:18px;color:#3434c4;">TEventWrite_Msg</div></div><div style="left:763px;top:831px;width:2px;height:134px;background:#8a8a8a"></div><div style="left:772px;top:833px;width:8px;height:2px;background:#c8c8c8"></div><div style="left:43px;top:1118px;width:485px;height:2px;background:#8a8a8a"></div><div style="left:814px;top:813px;width:764px;height:315px;border:1px solid #888;background:#f0f0f0"></div><div style="left:815px;top:814px;width:729px;height:296px;background:#e8f0fd"></div><div style="left:815px;top:814px;width:729px;height:296px;overflow:hidden"><div class="t m" style="left:200px;top:19px;height:18px;line-height:18px;color:#222;">**************************************************************</div><div class="t m" style="left:200px;top:37px;height:18px;line-height:18px;color:#222;">* void __cdecl TEventWrite_Msg(unsigned long,unsigned sho... *</div><div class="t m" style="left:200px;top:55px;height:18px;line-height:18px;color:#222;">**************************************************************</div><div class="t m" style="left:200px;top:73px;height:18px;line-height:18px;color:#222">void __fastcall <span style="color:#3434c4">TEventWrite_Msg</span>(ulong param_1, ushort * <b>…</b></div><div style="left:200px;top:74px;width:2px;height:16px;background:#d01010"></div><div class="t m" style="left:90px;top:91px;height:18px;line-height:18px;color:#256f6f;">void</div><div class="t m" style="left:218px;top:91px;height:18px;line-height:18px;color:#256f6f;">&lt;VOID&gt;</div><div class="t m" style="left:320px;top:91px;height:18px;line-height:18px;color:#336a6a;">&lt;RETURN&gt;</div><div class="t m" style="left:90px;top:109px;height:18px;line-height:18px;color:#256f6f;">ulong</div><div class="t m" style="left:218px;top:109px;height:18px;line-height:18px;color:#256f6f;">ECX:4</div><div class="t m" style="left:320px;top:109px;height:18px;line-height:18px;color:#336a6a;">param_1</div><div class="t m" style="left:90px;top:127px;height:18px;line-height:18px;color:#256f6f;">ushort *</div><div class="t m" style="left:218px;top:127px;height:18px;line-height:18px;color:#256f6f;">RDX:8</div><div class="t m" style="left:320px;top:127px;height:18px;line-height:18px;color:#336a6a;">param_2</div><div class="t m" style="left:90px;top:145px;height:18px;line-height:18px;color:#256f6f;">ulong</div><div class="t m" style="left:218px;top:145px;height:18px;line-height:18px;color:#256f6f;">R8D:4</div><div class="t m" style="left:320px;top:145px;height:18px;line-height:18px;color:#336a6a;">param_3</div><div class="t m" style="left:90px;top:163px;height:18px;line-height:18px;color:#256f6f;">char *</div><div class="t m" style="left:218px;top:163px;height:18px;line-height:18px;color:#256f6f;">R9:8</div><div class="t m" style="left:320px;top:163px;height:18px;line-height:18px;color:#336a6a;">param_4</div><div class="t m" style="left:200px;top:181px;height:18px;line-height:18px;color:#8f8f52;">?TEventWrite_Msg@@YAXKPEBGKPEAG@Z</div><div class="t m" style="left:200px;top:199px;height:18px;line-height:18px;color:#8f8f52;">?Notify@?$TConsumer@VTIniSpoolerWrapper@@@NThr</div><div class="t" style="left:522px;top:199px;height:18px;line-height:18px;color:#8f8f52;font-weight:bold;font-size:11px">…</div><div class="t m" style="left:200px;top:217px;height:18px;line-height:18px;color:#8f8f52;">?OutsidePackageLock@NPackageInstallLocalspl@@Y</div><div class="t" style="left:522px;top:217px;height:18px;line-height:18px;color:#8f8f52;font-weight:bold;font-size:11px">…</div><div class="t m" style="left:200px;top:235px;height:18px;line-height:18px;color:#8f8f52;">?Print@TANAttributes@NAsyncNotifyLocalspl@@QEA</div><div class="t" style="left:522px;top:235px;height:18px;line-height:18px;color:#8f8f52;font-weight:bold;font-size:11px">…</div><div class="t m" style="left:200px;top:253px;height:18px;line-height:18px;color:#8f8f52;">??1TErrorHandler@NDPS_UtilityLibrary@@QEAA@XZ</div><div class="t m" style="left:200px;top:271px;height:18px;line-height:18px;color:#8f8f52;">?TEventWrite_Msg@@YAXKPEBGKPEAD@Z</div><div class="t m" style="left:538px;top:181px;height:18px;line-height:18px;color:#222;">XREF[451]:</div><div class="t m" style="left:628px;top:181px;height:18px;line-height:18px;color:#222;">FUN_7ff76f01010</div><div class="t m" style="left:628px;top:199px;height:18px;line-height:18px;color:#222;">FUN_7ff76f01114</div><div class="t m" style="left:628px;top:217px;height:18px;line-height:18px;color:#222;">SplOpenPrinter:</div><div class="t m" style="left:628px;top:235px;height:18px;line-height:18px;color:#222;">CreateServerHandle</div><div class="t m" style="left:628px;top:253px;height:18px;line-height:18px;color:#222;">CreateServerHandle</div><div class="t m" style="left:628px;top:271px;height:18px;line-height:18px;color:#222;">SplOpenPrinter:</div><div class="t m" style="left:628px;top:289px;height:18px;line-height:18px;color:#222;">SplOpenPrinter:</div><div class="t m" style="left:200px;top:289px;height:18px;line-height:18px;color:#3434c4;">TEventWrite_Msg</div></div><div style="left:1552px;top:831px;width:2px;height:134px;background:#8a8a8a"></div><div style="left:1561px;top:833px;width:8px;height:2px;background:#c8c8c8"></div><div style="left:832px;top:1118px;width:485px;height:2px;background:#8a8a8a"></div><div style="left:794px;top:796px;width:1px;height:335px;background:#7a7a7a"></div><div style="left:1px;top:1137px;width:1585px;height:29px;background:#f0f0f0"></div><div style="left:24px;top:1140px;width:1563px;height:26px;border-left:1px solid #808080;border-top:1px solid #808080;background:#f0f0f0"></div><div style="left:25px;top:1141px;width:1562px;height:1px;background:#fafafa"></div><div style="left:25px;top:1141px;width:1px;height:25px;background:#fafafa"></div><div class="t" style="left:28px;top:1143px;height:18px;line-height:18px;letter-spacing:-0.17px">Auto Version Tracking Command completed successfully with no apply markup errors.</div><svg style="left:4px;top:1144px" width="17" height="17" viewBox="0 0 17 17"><circle cx="8" cy="8" r="7.5" fill="#fff7f0" stroke="#4a2020" stroke-width="1"/><path d="M2.5 9.5L5 8L7.5 5L10 3.2L12.5 3.5L13.5 6L12 8.5L9.5 9.5L10.5 12L8.5 13.5L7.5 11.5L8 9.8L6 9.5L4 10.8Z" fill="#d82a20"/></svg></body></html>
